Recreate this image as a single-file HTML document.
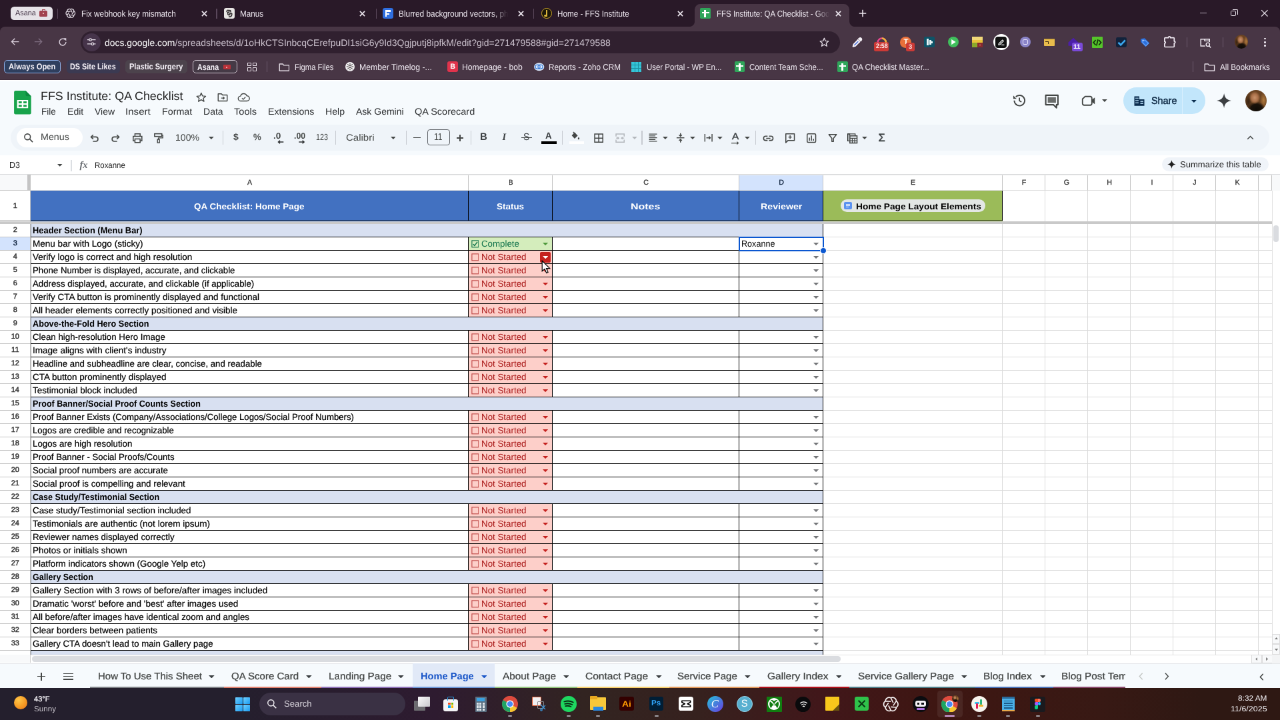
<!DOCTYPE html>
<html lang="en"><head><meta charset="utf-8"><title>FFS Institute: QA Checklist - Google Sheets</title>
<style>
html,body{margin:0;padding:0;width:1280px;height:720px;overflow:hidden;background:#fff;}
body{font-family:"Liberation Sans",sans-serif;}
#root{will-change:transform;position:absolute;left:0;top:0;width:1920px;height:1080px;transform:scale(0.6666667);transform-origin:0 0;overflow:hidden;background:#fff;}
#root div,#root span.t,#root svg{position:absolute;box-sizing:border-box;}
#root span.t{white-space:nowrap;display:block;}
#root{text-rendering:geometricPrecision;}

</style></head>
<body>
<div id="root">
<!-- chrome -->
<div style="left:0px;top:0px;width:1920px;height:60px;background:#291928;"></div>
<div style="left:0px;top:39.6px;width:1920px;height:80.85px;background:#483645;border-radius:7.5px 7.5px 0 0;"></div>
<div style="left:0px;top:119.4px;width:1920px;height:1.05px;background:#3e2d3b;"></div>
<div style="left:1041.9px;top:6px;width:232.5px;height:36px;background:#483645;border-radius:8.25px 8.25px 0 0;"></div>
<svg style="left:1033.8px;top:31.8px" width="8.1" height="8.1" viewBox="0 0 10 10"><path d="M10 0V10H0A10 10 0 0 0 10 0Z" fill="#483645"/></svg>
<svg style="left:1274.4px;top:31.8px" width="8.1" height="8.1" viewBox="0 0 10 10"><path d="M0 0V10H10A10 10 0 0 1 0 0Z" fill="#483645"/></svg>
<div style="left:15.9px;top:10.2px;width:63.6px;height:19.8px;background:#e6e3e8;border-radius:5.4px;"></div>
<span class="t" style="left:22.5px;top:14.01px;font-size:11.4px;line-height:13.68px;color:#3a2a3c;transform:scaleX(0.9559);transform-origin:0 50%;">Asana</span>
<div style="left:59.4px;top:16.2px;width:12px;height:9px;background:#a2434f;border-radius:1.5px;"></div>
<div style="left:63px;top:14.4px;width:4.8px;height:2.4px;border:1.2px solid #a2434f;border-bottom:none;border-radius:1px 1px 0 0;"></div>
<div style="left:64.35px;top:19.2px;width:2.1px;height:2.1px;background:#e8b0b0;"></div>
<div style="left:85.8px;top:12.6px;width:1.35px;height:15.9px;background:#5a475b;"></div>
<div style="left:324.3px;top:12.6px;width:1.35px;height:15.9px;background:#5a475b;"></div>
<div style="left:564px;top:12.6px;width:1.35px;height:15.9px;background:#5a475b;"></div>
<div style="left:800.1px;top:12.6px;width:1.35px;height:15.9px;background:#5a475b;"></div>
<svg style="left:98.1px;top:12.3px" width="15.6" height="15.6" viewBox="-12 -12 24 24"><path d="M0.00 -9.20A5.4 5.4 0 0 1 7.97 -4.60L3.46 2.00M7.97 -4.60A5.4 5.4 0 0 1 7.97 4.60L0.00 4.00M7.97 4.60A5.4 5.4 0 0 1 0.00 9.20L-3.46 2.00M0.00 9.20A5.4 5.4 0 0 1 -7.97 4.60L-3.46 -2.00M-7.97 4.60A5.4 5.4 0 0 1 -7.97 -4.60L-0.00 -4.00M-7.97 -4.60A5.4 5.4 0 0 1 -0.00 -9.20L3.46 -2.00" fill="none" stroke="#ece6ee" stroke-width="1.9" stroke-linejoin="round"/></svg>
<span class="t" style="left:122.4px;top:13.02px;font-size:13.05px;line-height:15.66px;color:#ece6ee;transform:scaleX(0.9058);transform-origin:0 50%;">Fix webhook key mismatch</span>
<svg style="left:301.5px;top:15.9px" width="9" height="9" viewBox="0 0 10 10"><path d="M1 1L9 9M9 1L1 9" stroke="#ece6ee" stroke-width="1.9" fill="none"/></svg>
<div style="left:336px;top:12px;width:15.9px;height:16.2px;background:#e8e6e4;border-radius:3.3px;"></div>
<svg style="left:336.9px;top:12.9px" width="14.4" height="14.4" viewBox="0 0 24 24"><g fill="none" stroke="#2e2a2c" stroke-width="2.6" stroke-linecap="round"><path d="M5 7C6 3 10 3 11 6S9 10 7 9M10 5C13 3 16 5 15 8M8 11C7 15 10 17 13 15V11M13 13C15 10 19 11 18 15S15 21 11 20"/></g></svg>
<span class="t" style="left:360.3px;top:13.02px;font-size:13.05px;line-height:15.66px;color:#ece6ee;transform:scaleX(0.8961);transform-origin:0 50%;">Manus</span>
<svg style="left:539.4px;top:15.9px" width="9" height="9" viewBox="0 0 10 10"><path d="M1 1L9 9M9 1L1 9" stroke="#ece6ee" stroke-width="1.9" fill="none"/></svg>
<div style="left:574.2px;top:12px;width:15.6px;height:16.2px;background:#2f6fe0;border-radius:3.3px;"></div>
<div style="left:577.5px;top:15.3px;width:8.7px;height:2.55px;background:#fff;"></div>
<div style="left:577.5px;top:15.3px;width:2.7px;height:9.9px;background:#fff;"></div>
<div style="left:577.5px;top:19.5px;width:6.6px;height:2.4px;background:#fff;"></div>
<span class="t" style="left:597.9px;top:13.02px;font-size:13.05px;line-height:15.66px;color:#ece6ee;transform:scaleX(0.9082);transform-origin:0 50%;-webkit-mask-image:linear-gradient(90deg,#000 86%,transparent 100%);">Blurred background vectors, ph</span>
<svg style="left:777.3px;top:15.9px" width="9" height="9" viewBox="0 0 10 10"><path d="M1 1L9 9M9 1L1 9" stroke="#ece6ee" stroke-width="1.9" fill="none"/></svg>
<div style="left:812.1px;top:12.3px;width:15.6px;height:15.6px;background:#1b1708;border-radius:50%;border:1.35px solid #c9a227;"></div>
<div style="left:819px;top:14.7px;width:1.8px;height:10.8px;background:#d9b43a;"></div>
<div style="left:816.3px;top:21.9px;width:4.5px;height:3.6px;background:#d9b43a;border-radius:50%;"></div>
<span class="t" style="left:836.4px;top:13.02px;font-size:13.05px;line-height:15.66px;color:#ece6ee;transform:scaleX(0.8947);transform-origin:0 50%;">Home - FFS Institute</span>
<svg style="left:1015.5px;top:15.9px" width="9" height="9" viewBox="0 0 10 10"><path d="M1 1L9 9M9 1L1 9" stroke="#ece6ee" stroke-width="1.9" fill="none"/></svg>
<div style="left:1050px;top:12.3px;width:16.2px;height:16.2px;background:#2fa65a;border-radius:1.8px;"></div>
<div style="left:1052.59px;top:17.81px;width:11.02px;height:2.27px;background:#fff;"></div>
<div style="left:1056.48px;top:14.89px;width:2.59px;height:11.34px;background:#fff;"></div>
<span class="t" style="left:1074.6px;top:13.02px;font-size:13.05px;line-height:15.66px;color:#ece6ee;transform:scaleX(0.8819);transform-origin:0 50%;-webkit-mask-image:linear-gradient(90deg,#000 88%,transparent 100%);">FFS Institute: QA Checklist - Goo</span>
<svg style="left:1253.4px;top:15.9px" width="9" height="9" viewBox="0 0 10 10"><path d="M1 1L9 9M9 1L1 9" stroke="#ece6ee" stroke-width="1.9" fill="none"/></svg>
<svg style="left:1287.6px;top:14.4px" width="12" height="12" viewBox="0 0 10 10"><path d="M5 0.6V9.4M0.6 5H9.4" stroke="#ece6ee" stroke-width="1.3" fill="none"/></svg>
<div style="left:1799.7px;top:19.05px;width:10.5px;height:1.2px;background:#b5aab6;"></div>
<div style="left:1846.2px;top:16.2px;width:8.1px;height:8.1px;border:1.2px solid #ece6ee;border-radius:1.5px;"></div>
<div style="left:1848.6px;top:14.1px;width:8.1px;height:8.1px;border-top:1.2px solid #ece6ee;border-right:1.2px solid #ece6ee;border-radius:0 2px 0 0;"></div>
<svg style="left:1890.75px;top:14.25px" width="11.7" height="11.7" viewBox="0 0 10 10"><path d="M1 1L9 9M9 1L1 9" stroke="#ece6ee" stroke-width="1.0" fill="none"/></svg>
<svg style="left:15.6px;top:56.4px" width="13.2" height="13.2" viewBox="0 0 16 16"><path d="M15 8H2M7.6 2.2L1.8 8L7.6 13.8" stroke="#d9cfdb" stroke-width="1.7" fill="none"/></svg>
<svg style="left:51.3px;top:56.4px" width="13.2" height="13.2" viewBox="0 0 16 16"><path d="M1 8H14M8.4 2.2L14.2 8L8.4 13.8" stroke="#7d6c7f" stroke-width="1.7" fill="none"/></svg>
<svg style="left:87px;top:56.1px" width="14.1" height="14.1" viewBox="0 0 16 16"><path d="M13.6 8A5.6 5.6 0 1 1 11.6 3.7" stroke="#d9cfdb" stroke-width="1.6" fill="none"/><path d="M9.2 1.4H14V6.2Z" fill="#d9cfdb"/></svg>
<div style="left:120.6px;top:46.5px;width:1139.7px;height:33px;background:#30202f;border-radius:16.5px;"></div>
<div style="left:123.6px;top:49.5px;width:27px;height:27px;background:#46344a;border-radius:50%;"></div>
<svg style="left:129.9px;top:56.4px" width="14.4" height="13.5" viewBox="0 0 16 15"><g stroke="#e6dfe8" stroke-width="1.5" fill="none"><path d="M1 4H4M8.4 4H15M1 11H7.6M12 11H15"/><circle cx="6.2" cy="4" r="2"/><circle cx="9.8" cy="11" r="2"/></g></svg>
<span class="t" style="left:157.2px;top:55.65px;font-size:14.02px;line-height:16.8px;color:#fff;transform:scaleX(0.9947);transform-origin:0 50%;">docs.google.com<span style="color:#c9bfcb">/spreadsheets/d/1oHkCTSInbcqCErefpuDI1siG6y9Id3Qgjputj8ipfkM/edit?gid=271479588#gid=271479588</span></span>
<svg style="left:1227.9px;top:54.9px" width="16.8" height="16.8" viewBox="0 0 24 24"><path d="M12 3.2L14.6 9.2L21 9.8L16.2 14L17.6 20.4L12 17L6.4 20.4L7.8 14L3 9.8L9.4 9.2Z" stroke="#e6dfe8" stroke-width="1.9" fill="none" stroke-linejoin="round"/></svg>
<svg style="left:1277.4px;top:54.9px" width="17.4" height="17.4" viewBox="0 0 24 24"><path d="M3.6 20.4L5 15.6L13.4 7.2L16.8 10.6L8.4 19Z" fill="#4a6fd8" stroke="#f6f2f8" stroke-width="2.6" stroke-linejoin="round"/><path d="M12.6 6L18 11.4M15 4.4L19.6 9L21.4 6.6C22 4 20 2 17.4 2.6Z" fill="#f6f2f8" stroke="#f6f2f8" stroke-width="2"/></svg>
<div style="left:1311.3px;top:63px;width:22.2px;height:13.8px;background:#cc3a36;border-radius:2.7px;"></div>
<svg style="left:1314.6px;top:53.4px" width="15.6" height="12" viewBox="0 0 20 14"><path d="M2 13A8 8 0 0 1 18 13" stroke="#e8468c" stroke-width="3.2" fill="none"/><path d="M10 5A8 8 0 0 1 18 13" stroke="#f2b63a" stroke-width="3.2" fill="none"/></svg>
<span class="t" style="left:1313.7px;top:64.29px;font-size:9.6px;line-height:11.52px;color:#fbeaea;font-weight:bold;transform:scaleX(0.9212);transform-origin:0 50%;">2:58</span>
<div style="left:1350.3px;top:55.2px;width:16.5px;height:16.5px;background:#e8703a;border-radius:50%;"></div>
<span class="t" style="left:1355.4px;top:56.76px;font-size:11.4px;line-height:13.68px;color:#fff;font-weight:bold;">T</span>
<div style="left:1358.7px;top:63.9px;width:13.5px;height:12.9px;background:#cc3a36;border-radius:2.7px;"></div>
<span class="t" style="left:1362.9px;top:64.92px;font-size:9.3px;line-height:11.16px;color:#fbeaea;font-weight:bold;">3</span>
<div style="left:1386.3px;top:55.2px;width:16.2px;height:16.2px;background:#0d5468;border-radius:2.1px;"></div>
<div style="left:1390.2px;top:58.2px;width:2.4px;height:10.2px;background:#e8f4f6;"></div>
<div style="left:1394.4px;top:59.7px;width:2.4px;height:7.2px;background:#e8f4f6;"></div>
<div style="left:1397.4px;top:61.8px;width:2.1px;height:3px;background:#e8f4f6;"></div>
<div style="left:1421.7px;top:55.2px;width:16.2px;height:16.2px;background:#3fbf5c;border-radius:50%;"></div>
<svg style="left:1427.4px;top:59.4px" width="6.9" height="8.1" viewBox="0 0 8 10"><path d="M0 0L8 5L0 10Z" fill="#fff"/></svg>
<div style="left:1457.7px;top:55.2px;width:16.2px;height:15.9px;background:#e8c23a;border-radius:1px;"></div>
<div style="left:1457.7px;top:55.2px;width:16.2px;height:5.1px;background:#f1d878;"></div>
<div style="left:1457.7px;top:63.9px;width:8.4px;height:7.2px;background:#8aa82a;"></div>
<div style="left:1466.1px;top:63.9px;width:7.8px;height:7.2px;background:#8a2a2e;"></div>
<div style="left:1469.4px;top:66.6px;width:1.8px;height:1.8px;background:#f0b0b0;"></div>
<div style="left:1489.5px;top:51px;width:24.3px;height:24.3px;background:#fff;border-radius:50%;"></div>
<div style="left:1493.1px;top:54.6px;width:17.1px;height:17.1px;background:#111;border-radius:3.9px;"></div>
<svg style="left:1495.5px;top:57px" width="12.3" height="12.3" viewBox="0 0 16 16"><path d="M3 11L10 4L12 6L5 13L2.6 13.4Z M8 13.4H13.6" stroke="#fff" stroke-width="1.6" fill="none"/></svg>
<div style="left:1529.7px;top:55.2px;width:16.2px;height:16.2px;background:#8a84c8;border-radius:50%;"></div>
<div style="left:1533.6px;top:59.4px;width:8.4px;height:7.8px;border:1.35px solid #e8e4fa;border-radius:2.1px;"></div>
<div style="left:1566.3px;top:57.6px;width:15.3px;height:11.1px;background:#e8bc4c;border-radius:1px;"></div>
<div style="left:1566.3px;top:57.6px;width:15.3px;height:1.8px;background:#a88428;"></div>
<div style="left:1567.8px;top:61.5px;width:4.8px;height:4.8px;border-top:1.2px solid #3a2a10;border-right:1.2px solid #3a2a10;"></div>
<svg style="left:1600.5px;top:55.5px" width="18" height="13.5" viewBox="0 0 24 18"><path d="M2 10L12 1L22 10V17H2Z" fill="#4b1fa8"/></svg>
<div style="left:1608px;top:63.9px;width:15.9px;height:12.9px;background:#7a4ad8;border-radius:2.7px;"></div>
<span class="t" style="left:1610.4px;top:65.07px;font-size:9.3px;line-height:11.16px;color:#fff;font-weight:bold;transform:scaleX(1.0985);transform-origin:0 50%;">11</span>
<div style="left:1637.7px;top:55.2px;width:16.8px;height:16.5px;background:#55c42a;border-radius:1px;"></div>
<svg style="left:1639.2px;top:57.6px" width="13.8" height="11.7" viewBox="0 0 18 14"><path d="M6 2L1.5 7L6 12M12 2L16.5 7L12 12M10.4 1L7.6 13" stroke="#12320a" stroke-width="2.2" fill="none"/></svg>
<div style="left:1674px;top:55.5px;width:16.2px;height:15.9px;background:#12233c;border-radius:2.4px;"></div>
<svg style="left:1675.5px;top:57.9px" width="13.2" height="11.4" viewBox="0 0 18 14"><path d="M2 7L7 12L16 2.4" stroke="#3aa8f0" stroke-width="3.6" fill="none"/></svg>
<svg style="left:1709.4px;top:54.9px" width="17.4" height="17.4" viewBox="0 0 24 24"><path d="M3 4.5L11 3L21 13L13 21L3 11Z" fill="#2a6fdc"/><path d="M7 9L12 7.5L18.6 14L13.6 19L7 12.6Z" fill="none" stroke="#6aa4f4" stroke-width="1.6"/><circle cx="7.6" cy="7.6" r="1.5" fill="#cfe0ff"/></svg>
<svg style="left:1740px;top:51px" width="30" height="24" viewBox="1160 34 20 16"><path d="M1165.2 37.8H1168.3A1.1 1.2 0 0 1 1170.5 37.8H1173.6A0.6 0.6 0 0 1 1174.2 38.4V41.2A1 1 0 0 1 1174.2 43.2V46.4A0.6 0.6 0 0 1 1173.6 47H1165.2A0.6 0.6 0 0 1 1164.6 46.4V43.4A0.9 0.9 0 0 0 1164.6 41.6V38.4A0.6 0.6 0 0 1 1165.2 37.8Z" fill="none" stroke="#efe9f1" stroke-width="1.15" stroke-linejoin="round"/></svg>
<div style="left:1780.2px;top:55.5px;width:1.2px;height:15.6px;background:#6a586c;"></div>
<svg style="left:1798.5px;top:54.6px" width="18.9" height="17.7" viewBox="0 0 26 24"><path d="M12 19H3V5H21V11" fill="none" stroke="#efe9f1" stroke-width="2"/><path d="M11 5V8.6H21" fill="none" stroke="#efe9f1" stroke-width="2"/><circle cx="17.6" cy="16" r="3.6" fill="none" stroke="#efe9f1" stroke-width="2"/><path d="M20.2 18.8L23.6 22.4" stroke="#efe9f1" stroke-width="2"/></svg>
<div style="left:1834.2px;top:55.5px;width:1.2px;height:15.6px;background:#6a586c;"></div>
<div style="left:1851.6px;top:52.2px;width:20.7px;height:20.7px;background:radial-gradient(ellipse 26% 30% at 44% 36%,#c9926a 0,#a96f48 60%,rgba(169,111,72,0) 100%),radial-gradient(ellipse 42% 36% at 52% 90%,#0f0b06 0,#1a120a 65%,rgba(26,18,10,0) 100%),radial-gradient(ellipse 18% 38% at 86% 48%,#b07a3e 0,rgba(176,122,62,0) 100%),radial-gradient(ellipse 20% 40% at 14% 55%,#3a2412 0,rgba(58,36,18,0) 100%),#6a4322;border-radius:50%;"></div>
<div style="left:1896.3px;top:56.55px;width:2.7px;height:2.7px;background:#efe9f1;border-radius:50%;"></div>
<div style="left:1896.3px;top:61.95px;width:2.7px;height:2.7px;background:#efe9f1;border-radius:50%;"></div>
<div style="left:1896.3px;top:67.35px;width:2.7px;height:2.7px;background:#efe9f1;border-radius:50%;"></div>
<div style="left:6.3px;top:90.3px;width:84.9px;height:19.8px;background:#2f3f5e;border:1.2px solid #8fb0e8;border-radius:5.1px;"></div>
<span class="t" style="left:13.2px;top:92.79px;font-size:12.6px;line-height:15.12px;color:#f4f0f6;font-weight:bold;transform:scaleX(0.8910);transform-origin:0 50%;">Always Open</span>
<div style="left:99.6px;top:90.3px;width:80.1px;height:19.8px;background:#3b3a52;border:1.2px solid #3b3a52;border-radius:5.1px;"></div>
<span class="t" style="left:105.3px;top:92.79px;font-size:12.6px;line-height:15.12px;color:#f4f0f6;font-weight:bold;transform:scaleX(0.8605);transform-origin:0 50%;">DS Site Likes</span>
<div style="left:188.1px;top:90.3px;width:92.7px;height:19.8px;background:#4c434c;border:1.2px solid #4c434c;border-radius:5.1px;"></div>
<span class="t" style="left:194.4px;top:92.79px;font-size:12.6px;line-height:15.12px;color:#f4f0f6;font-weight:bold;transform:scaleX(0.8764);transform-origin:0 50%;">Plastic Surgery</span>
<div style="left:288.9px;top:90.3px;width:67.2px;height:19.8px;background:#453a46;border:1.2px solid #cfc6d0;border-radius:5.1px;"></div>
<span class="t" style="left:296.4px;top:92.61px;font-size:12.9px;line-height:15.48px;color:#f4f0f6;font-weight:bold;transform:scaleX(0.8290);transform-origin:0 50%;">Asana</span>
<div style="left:334.5px;top:96.9px;width:11.1px;height:7.5px;background:#b8323a;border-radius:1px;"></div>
<div style="left:339px;top:99.6px;width:2.1px;height:2.1px;background:#f0a0a0;"></div>
<div style="left:371.1px;top:93.6px;width:5.7px;height:5.7px;border:1.12px solid #e6dfe8;border-radius:0.5px;"></div>
<div style="left:371.1px;top:101.4px;width:5.7px;height:5.7px;border:1.12px solid #e6dfe8;border-radius:0.5px;"></div>
<div style="left:378.9px;top:93.6px;width:5.7px;height:5.7px;border:1.12px solid #e6dfe8;border-radius:0.5px;"></div>
<div style="left:378.9px;top:101.4px;width:5.7px;height:5.7px;border:1.12px solid #e6dfe8;border-radius:0.5px;"></div>
<div style="left:400.2px;top:92.4px;width:1.2px;height:15.9px;background:#6a586c;"></div>
<svg style="left:417.6px;top:93.6px" width="16.8" height="13.8" viewBox="0 0 22 18"><path d="M1.6 2.6H8L10 5H20.4V16H1.6Z" fill="none" stroke="#e6dfe8" stroke-width="1.8" stroke-linejoin="round"/></svg>
<span class="t" style="left:441.9px;top:92.61px;font-size:12.9px;line-height:15.48px;color:#ece6ee;transform:scaleX(0.8776);transform-origin:0 50%;">Figma Files</span>
<div style="left:517.8px;top:93px;width:14.4px;height:14.4px;background:#f4f2f4;border-radius:50%;"></div>
<svg style="left:519px;top:94.2px" width="12" height="12" viewBox="0 0 16 16"><g stroke="#3a3436" stroke-width="1.4" fill="none"><circle cx="8" cy="8" r="2.4"/><path d="M8 1V4M8 12V15M1 8H4M12 8H15M3 3L5.2 5.2M10.8 10.8L13 13M13 3L10.8 5.2M5.2 10.8L3 13"/></g></svg>
<span class="t" style="left:539.1px;top:92.61px;font-size:12.9px;line-height:15.48px;color:#ece6ee;transform:scaleX(0.9495);transform-origin:0 50%;">Member Timelog -...</span>
<div style="left:670.8px;top:92.4px;width:15.9px;height:15.9px;background:#e0334c;border-radius:3px;"></div>
<span class="t" style="left:675.3px;top:94.02px;font-size:10.8px;line-height:12.96px;color:#fff;font-weight:bold;">B</span>
<span class="t" style="left:693.3px;top:92.61px;font-size:12.9px;line-height:15.48px;color:#ece6ee;transform:scaleX(0.9459);transform-origin:0 50%;">Homepage - bob</span>
<svg style="left:800.1px;top:93px" width="17.4" height="14.4" viewBox="0 0 24 20"><ellipse cx="12" cy="10" rx="10.6" ry="8.4" fill="#dbe9fb"/><ellipse cx="9" cy="10" rx="5" ry="4.2" fill="none" stroke="#3a7bd5" stroke-width="1.8"/><ellipse cx="14.6" cy="10" rx="5" ry="4.2" fill="none" stroke="#3a7bd5" stroke-width="1.8"/></svg>
<span class="t" style="left:823.2px;top:92.61px;font-size:12.9px;line-height:15.48px;color:#ece6ee;transform:scaleX(0.9076);transform-origin:0 50%;">Reports - Zoho CRM</span>
<div style="left:947.1px;top:92.7px;width:15.3px;height:15.3px;background:#35c5d8;"></div>
<div style="left:951.75px;top:92.7px;width:0.9px;height:15.3px;background:#1a8fa0;"></div>
<div style="left:947.1px;top:97.35px;width:15.3px;height:0.9px;background:#1a8fa0;"></div>
<div style="left:956.85px;top:92.7px;width:0.9px;height:15.3px;background:#1a8fa0;"></div>
<div style="left:947.1px;top:102.45px;width:15.3px;height:0.9px;background:#1a8fa0;"></div>
<span class="t" style="left:970.2px;top:92.61px;font-size:12.9px;line-height:15.48px;color:#ece6ee;transform:scaleX(0.8883);transform-origin:0 50%;">User Portal - WP En...</span>
<div style="left:1101.9px;top:92.4px;width:15.6px;height:15.6px;background:#2fa65a;border-radius:1.8px;"></div>
<div style="left:1104.4px;top:97.7px;width:10.61px;height:2.18px;background:#fff;"></div>
<div style="left:1108.14px;top:94.9px;width:2.5px;height:10.92px;background:#fff;"></div>
<span class="t" style="left:1124.1px;top:92.61px;font-size:12.9px;line-height:15.48px;color:#ece6ee;transform:scaleX(0.8941);transform-origin:0 50%;">Content Team Sche...</span>
<div style="left:1256.1px;top:92.4px;width:15.6px;height:15.6px;background:#2fa65a;border-radius:1.8px;"></div>
<div style="left:1258.6px;top:97.7px;width:10.61px;height:2.18px;background:#fff;"></div>
<div style="left:1262.34px;top:94.9px;width:2.5px;height:10.92px;background:#fff;"></div>
<span class="t" style="left:1278px;top:92.61px;font-size:12.9px;line-height:15.48px;color:#ece6ee;transform:scaleX(0.9126);transform-origin:0 50%;">QA Checklist Master...</span>
<div style="left:1788.6px;top:92.4px;width:1.2px;height:15.9px;background:#6a586c;"></div>
<svg style="left:1806px;top:93.6px" width="16.8" height="13.8" viewBox="0 0 22 18"><path d="M1.6 2.6H8L10 5H20.4V16H1.6Z" fill="none" stroke="#e6dfe8" stroke-width="1.8" stroke-linejoin="round"/></svg>
<span class="t" style="left:1830.3px;top:92.61px;font-size:12.9px;line-height:15.48px;color:#ece6ee;transform:scaleX(0.9098);transform-origin:0 50%;">All Bookmarks</span>
<!-- sheets header -->
<div style="left:0px;top:120.45px;width:1920px;height:141.6px;background:#f6fafd;"></div>
<div style="left:0px;top:120.45px;width:1920px;height:1.8px;background:#fff;"></div>
<svg style="left:21.3px;top:136.2px" width="25.8" height="35.4" viewBox="0 0 34 47"><path d="M3 0H23L34 11V44A3 3 0 0 1 31 47H3A3 3 0 0 1 0 44V3A3 3 0 0 1 3 0Z" fill="#18a34b"/><path d="M23 0L34 11H26A3 3 0 0 1 23 8Z" fill="#0e8a40"/><path d="M6 18.6H28V35H6Z M9 21.4V25.2H15.4V21.4Z M18.6 21.4V25.2H25V21.4Z M9 28.2V32.2H15.4V28.2Z M18.6 28.2V32.2H25V28.2Z" fill="#fff" fill-rule="evenodd"/></svg>
<span class="t" style="left:61.2px;top:134.19px;font-size:17.85px;line-height:21.42px;color:#1f1f1f;transform:scaleX(1.0015);transform-origin:0 50%;">FFS Institute: QA Checklist</span>
<svg style="left:293.1px;top:136.5px" width="17.7" height="17.7" viewBox="0 0 24 24"><path d="M12 3.4L14.6 9.4L21 10L16.2 14.2L17.6 20.6L12 17.2L6.4 20.6L7.8 14.2L3 10L9.4 9.4Z" stroke="#444746" stroke-width="1.9" fill="none" stroke-linejoin="round"/></svg>
<svg style="left:324.6px;top:136.8px" width="18" height="18" viewBox="0 0 24 24"><path d="M3 5H9.6L11.6 7.4H21V19.4H3Z" stroke="#444746" stroke-width="1.9" fill="none" stroke-linejoin="round"/><path d="M9 13.4H15M12.6 10.8L15.2 13.4L12.6 16" stroke="#444746" stroke-width="1.7" fill="none"/></svg>
<svg style="left:356.4px;top:136.8px" width="19.2" height="18" viewBox="0 0 26 24"><path d="M7 19.4A5 5 0 0 1 6.6 9.4A6.6 6.6 0 0 1 19.2 9A5.2 5.2 0 0 1 19.6 19.4Z" stroke="#444746" stroke-width="1.9" fill="none" stroke-linejoin="round"/><path d="M9.4 13.6L12 16.2L16.6 11.4" stroke="#444746" stroke-width="1.7" fill="none"/></svg>
<span class="t" style="left:62.25px;top:159.18px;font-size:13.95px;line-height:16.74px;color:#2d2f31;transform:scaleX(0.9676);transform-origin:0 50%;">File</span>
<span class="t" style="left:101.4px;top:159.18px;font-size:13.95px;line-height:16.74px;color:#2d2f31;transform:scaleX(1.0109);transform-origin:0 50%;">Edit</span>
<span class="t" style="left:141.75px;top:159.18px;font-size:13.95px;line-height:16.74px;color:#2d2f31;transform:scaleX(1.0055);transform-origin:0 50%;">View</span>
<span class="t" style="left:188.4px;top:159.18px;font-size:13.95px;line-height:16.74px;color:#2d2f31;transform:scaleX(1.0834);transform-origin:0 50%;">Insert</span>
<span class="t" style="left:242.7px;top:159.18px;font-size:13.95px;line-height:16.74px;color:#2d2f31;transform:scaleX(1.0254);transform-origin:0 50%;">Format</span>
<span class="t" style="left:304.8px;top:159.18px;font-size:13.95px;line-height:16.74px;color:#2d2f31;transform:scaleX(1.0079);transform-origin:0 50%;">Data</span>
<span class="t" style="left:351.3px;top:159.18px;font-size:13.95px;line-height:16.74px;color:#2d2f31;transform:scaleX(1.0502);transform-origin:0 50%;">Tools</span>
<span class="t" style="left:401.7px;top:159.18px;font-size:13.95px;line-height:16.74px;color:#2d2f31;transform:scaleX(1.0156);transform-origin:0 50%;">Extensions</span>
<span class="t" style="left:488.1px;top:159.18px;font-size:13.95px;line-height:16.74px;color:#2d2f31;transform:scaleX(1.0143);transform-origin:0 50%;">Help</span>
<span class="t" style="left:534px;top:159.18px;font-size:13.95px;line-height:16.74px;color:#2d2f31;transform:scaleX(1.0054);transform-origin:0 50%;">Ask Gemini</span>
<span class="t" style="left:621.9px;top:159.18px;font-size:13.95px;line-height:16.74px;color:#2d2f31;transform:scaleX(1.0398);transform-origin:0 50%;">QA Scorecard</span>
<svg style="left:1517.1px;top:139.2px" width="23.4" height="23.4" viewBox="0 0 24 24"><path d="M4.6 12A8 8 0 1 0 7 6.4" stroke="#444746" stroke-width="2" fill="none"/><path d="M3 4.4V9.4H8Z" fill="#444746"/><path d="M12.4 7.6V12.4L15.6 14.4" stroke="#444746" stroke-width="1.9" fill="none"/></svg>
<svg style="left:1565.4px;top:138.6px" width="25.5" height="25.5" viewBox="0 0 24 24"><path d="M3.4 3.6H20.6V17H18.6V21.4L14.2 17H3.4Z" stroke="#444746" stroke-width="2" fill="none" stroke-linejoin="round"/><path d="M6.2 6.4H17.8V14.2H6.2Z" fill="#6a6d6c"/></svg>
<svg style="left:1620.9px;top:140.4px" width="24" height="22.5" viewBox="0 0 26 24"><path d="M7 5H15.6A2.6 2.6 0 0 1 18.2 7.6V16.4A2.6 2.6 0 0 1 15.6 19H5.6A2.6 2.6 0 0 1 3 16.4V9Z" stroke="#444746" stroke-width="2" fill="none" stroke-linejoin="round"/><path d="M18.4 10L23 6.6V17.4L18.4 14Z" fill="#444746"/></svg>
<svg style="left:1653px;top:149.48px" width="7.8" height="4.05" viewBox="0 0 10 5"><path d="M0 0H10L5 5Z" fill="#444746"/></svg>
<div style="left:1684.5px;top:131.4px;width:123px;height:39.3px;background:#c2e6fb;border-radius:19.65px;"></div>
<div style="left:1773.3px;top:131.4px;width:1.2px;height:39.3px;background:#d8effe;"></div>
<svg style="left:1700.4px;top:142.5px" width="18" height="17.4" viewBox="0 0 24 23"><path d="M2 2H12V8H22V21H2Z" fill="#0a2c4e"/><g fill="#c2e7ff"><rect x="4.4" y="4.6" width="2.2" height="2.2"/><rect x="8" y="4.6" width="2.2" height="2.2"/><rect x="4.4" y="9.2" width="2.2" height="2.2"/><rect x="8" y="9.2" width="2.2" height="2.2"/><rect x="4.4" y="13.8" width="2.2" height="2.2"/><rect x="8" y="13.8" width="2.2" height="2.2"/><rect x="14" y="11" width="6" height="2"/><rect x="14" y="15" width="6" height="2"/></g></svg>
<span class="t" style="left:1726.8px;top:142.8px;font-size:15px;line-height:18px;color:#0a2540;transform:scaleX(0.9593);transform-origin:0 50%;-webkit-text-stroke:0.45px #0a2540;">Share</span>
<svg style="left:1786.8px;top:149.85px" width="7.8" height="3.9" viewBox="0 0 10 5"><path d="M0 0H10L5 5Z" fill="#0b2e4f"/></svg>
<svg style="left:1824.6px;top:140.1px" width="22.2" height="22.2" viewBox="-12 -12 24 24"><path d="M0 -12C1.2 -4.6 4.6 -1.2 12 0C4.6 1.2 1.2 4.6 0 12C-1.2 4.6 -4.6 1.2 -12 0C-4.6 -1.2 -1.2 -4.6 0 -12Z" fill="#3c3f42"/></svg>
<div style="left:1867.95px;top:134.85px;width:32.1px;height:32.1px;background:radial-gradient(ellipse 26% 30% at 44% 36%,#c9926a 0,#a96f48 60%,rgba(169,111,72,0) 100%),radial-gradient(ellipse 42% 36% at 52% 90%,#0f0b06 0,#1a120a 65%,rgba(26,18,10,0) 100%),radial-gradient(ellipse 18% 38% at 86% 48%,#b07a3e 0,rgba(176,122,62,0) 100%),radial-gradient(ellipse 20% 40% at 14% 55%,#3a2412 0,rgba(58,36,18,0) 100%),#6a4322;border-radius:50%;"></div>
<div style="left:15.9px;top:186.6px;width:1888.5px;height:39.9px;background:#eff4f9;border-radius:19.95px;"></div>
<div style="left:24.9px;top:192px;width:99px;height:28.8px;background:#fff;border-radius:14.4px;"></div>
<svg style="left:34.8px;top:198.9px" width="15.6" height="15.6" viewBox="0 0 20 20"><circle cx="8" cy="8" r="5.6" stroke="#444746" stroke-width="2" fill="none"/><path d="M12.2 12.2L18 18" stroke="#444746" stroke-width="2.2"/></svg>
<span class="t" style="left:61.2px;top:197.13px;font-size:13.95px;line-height:16.74px;color:#444746;transform:scaleX(1.0246);transform-origin:0 50%;">Menus</span>
<svg style="left:133.35px;top:198.45px" width="17.1" height="17.1" viewBox="0 0 24 24"><path d="M6 10.4H15A4.6 4.6 0 0 1 15 19.6H9" stroke="#444746" stroke-width="2.3" fill="none"/><path d="M9.6 6L5 10.4L9.6 14.8" stroke="#444746" stroke-width="2.3" fill="none"/></svg>
<svg style="left:164.85px;top:198.45px" width="17.1" height="17.1" viewBox="0 0 24 24"><path d="M18 10.4H9A4.6 4.6 0 0 0 9 19.6H15" stroke="#444746" stroke-width="2.3" fill="none"/><path d="M14.4 6L19 10.4L14.4 14.8" stroke="#444746" stroke-width="2.3" fill="none"/></svg>
<svg style="left:196.5px;top:197.7px" width="18.6" height="18.6" viewBox="0 0 24 24"><path d="M7 8V3.6H17V8M7 17H3.6V8.4H20.4V17H17" stroke="#444746" stroke-width="2" fill="none"/><rect x="7" y="13.4" width="10" height="7" stroke="#444746" stroke-width="2" fill="none"/></svg>
<svg style="left:228px;top:197.7px" width="18.6" height="18.6" viewBox="0 0 24 24"><rect x="5" y="3.4" width="14" height="5.2" stroke="#444746" stroke-width="2" fill="none"/><path d="M19 6H21V11.4H12.4V14.4" stroke="#444746" stroke-width="1.8" fill="none"/><rect x="10.6" y="14.4" width="3.8" height="6.4" stroke="#444746" stroke-width="1.8" fill="none"/></svg>
<span class="t" style="left:263.1px;top:199.02px;font-size:13.8px;line-height:16.56px;color:#444746;transform:scaleX(1.0200);transform-origin:0 50%;">100%</span>
<svg style="left:312.9px;top:205.27px" width="7.8" height="4.05" viewBox="0 0 10 5"><path d="M0 0H10L5 5Z" fill="#444746"/></svg>
<div style="left:334.27px;top:196.2px;width:1.2px;height:20.4px;background:#c7cbd1;"></div>
<span class="t" style="left:350.1px;top:197.82px;font-size:13.8px;line-height:16.56px;color:#444746;font-weight:bold;transform:scaleX(1.0163);transform-origin:0 50%;">$</span>
<span class="t" style="left:380.1px;top:198px;font-size:13.5px;line-height:16.2px;color:#444746;transform:scaleX(0.9747);transform-origin:0 50%;-webkit-text-stroke:0.3px #444746;">%</span>
<span class="t" style="left:409.5px;top:197.34px;font-size:12.6px;line-height:15.12px;color:#444746;font-weight:bold;transform:scaleX(1.0849);transform-origin:0 50%;">.0</span>
<svg style="left:416.4px;top:210.3px" width="9.6" height="6" viewBox="0 0 12 8"><path d="M12 4H2M5 1L1.6 4L5 7" stroke="#2d2f31" stroke-width="2" fill="none"/></svg>
<span class="t" style="left:441.3px;top:197.34px;font-size:12.6px;line-height:15.12px;color:#444746;font-weight:bold;transform:scaleX(0.9763);transform-origin:0 50%;">.00</span>
<svg style="left:447.6px;top:210.3px" width="9.6" height="6" viewBox="0 0 12 8"><path d="M0 4H10M7 1L10.4 4L7 7" stroke="#2d2f31" stroke-width="2" fill="none"/></svg>
<span class="t" style="left:474.3px;top:198.48px;font-size:13.2px;line-height:15.84px;color:#444746;transform:scaleX(0.8173);transform-origin:0 50%;">123</span>
<div style="left:502.88px;top:196.2px;width:1.2px;height:20.4px;background:#c7cbd1;"></div>
<span class="t" style="left:519.3px;top:197.73px;font-size:13.95px;line-height:16.74px;color:#444746;transform:scaleX(1.0775);transform-origin:0 50%;">Calibri</span>
<svg style="left:585.6px;top:205.27px" width="7.8" height="4.05" viewBox="0 0 10 5"><path d="M0 0H10L5 5Z" fill="#444746"/></svg>
<div style="left:609.07px;top:196.2px;width:1.2px;height:20.4px;background:#c7cbd1;"></div>
<div style="left:620.4px;top:206.25px;width:10.8px;height:1.2px;background:#444746;"></div>
<div style="left:640.5px;top:194.1px;width:34.5px;height:24px;border:1.12px solid #5f6368;border-radius:3.9px;"></div>
<span class="t" style="left:651.3px;top:197.58px;font-size:14.7px;line-height:17.64px;color:#444746;transform:scaleX(0.8257);transform-origin:0 50%;">11</span>
<div style="left:684.6px;top:206.4px;width:10.8px;height:1.35px;background:#444746;"></div>
<div style="left:689.4px;top:201.6px;width:1.35px;height:10.8px;background:#444746;"></div>
<div style="left:705.97px;top:196.2px;width:1.2px;height:20.4px;background:#c7cbd1;"></div>
<span class="t" style="left:720.3px;top:197.37px;font-size:15.3px;line-height:18.36px;color:#3c4043;font-weight:bold;transform:scaleX(0.9774);transform-origin:0 50%;">B</span>
<span class="t" style="left:753.6px;top:197.85px;font-size:14.4px;line-height:17.4px;color:#3c4043;font-style:italic;font-weight:bold;font-family:'Liberation Serif',serif;">I</span>
<span class="t" style="left:785.1px;top:197.73px;font-size:14.7px;line-height:17.64px;color:#3c4043;transform:scaleX(0.9485);transform-origin:0 50%;">S</span>
<div style="left:781.8px;top:206.1px;width:15.9px;height:1.35px;background:#444746;"></div>
<span class="t" style="left:818.4px;top:196.2px;font-size:13.5px;line-height:16.2px;color:#3c4043;font-weight:bold;transform:scaleX(0.9847);transform-origin:0 50%;">A</span>
<div style="left:811.8px;top:212.1px;width:23.1px;height:3.75px;background:#000;"></div>
<div style="left:843.07px;top:196.2px;width:1.2px;height:20.4px;background:#c7cbd1;"></div>
<svg style="left:853.8px;top:195px" width="17.4" height="17.4" viewBox="0 0 24 24"><path d="M5 11.4L11 5L17.4 11.6L11 18Z" fill="#444746"/><path d="M8 4L11 7" stroke="#444746" stroke-width="2"/><path d="M19.4 14.6C20.6 16.4 21 17.2 21 18A1.7 1.7 0 0 1 17.6 18C17.6 17.2 18.2 16.4 19.4 14.6Z" fill="#444746"/></svg>
<div style="left:853.8px;top:212.4px;width:21.9px;height:3.6px;background:#fff;"></div>
<svg style="left:888.75px;top:197.85px" width="18.3" height="18.3" viewBox="0 0 24 24"><rect x="4" y="4" width="16" height="16" stroke="#444746" stroke-width="2" fill="none"/><path d="M12 4V20M4 12H20" stroke="#444746" stroke-width="2"/></svg>
<svg style="left:921.15px;top:197.85px" width="18.3" height="18.3" viewBox="0 0 24 24"><path d="M4 9V4H20V9M4 15V20H20V15" stroke="#b4b8bd" stroke-width="2" fill="none"/><path d="M4 12H9M20 12H15M7 10L9.4 12L7 14M17 10L14.6 12L17 14" stroke="#b4b8bd" stroke-width="1.8" fill="none"/></svg>
<svg style="left:948px;top:205.27px" width="7.8" height="4.05" viewBox="0 0 10 5"><path d="M0 0H10L5 5Z" fill="#b4b8bd"/></svg>
<div style="left:962.47px;top:196.2px;width:1.2px;height:20.4px;background:#c7cbd1;"></div>
<svg style="left:971.25px;top:198.45px" width="17.1" height="17.1" viewBox="0 0 24 24"><path d="M3.6 4.4H20.4M3.6 8.2H17M3.6 12H20.4M3.6 15.8H17M3.6 19.6H20.4" stroke="#444746" stroke-width="1.8"/></svg>
<svg style="left:993.9px;top:205.27px" width="7.8" height="4.05" viewBox="0 0 10 5"><path d="M0 0H10L5 5Z" fill="#444746"/></svg>
<svg style="left:1012.2px;top:198.3px" width="17.4" height="17.4" viewBox="0 0 24 24"><path d="M4 12H20" stroke="#444746" stroke-width="2"/><path d="M12 2.4V8.6M9 6L12 9L15 6M12 21.6V15.4M9 18L12 15L15 18" stroke="#444746" stroke-width="1.9" fill="none"/></svg>
<svg style="left:1035px;top:205.27px" width="7.8" height="4.05" viewBox="0 0 10 5"><path d="M0 0H10L5 5Z" fill="#444746"/></svg>
<svg style="left:1053.6px;top:198.3px" width="17.4" height="17.4" viewBox="0 0 24 24"><path d="M4.6 4V20M19.4 4V20" stroke="#444746" stroke-width="2"/><path d="M7.6 12H16M13 9L16 12L13 15" stroke="#444746" stroke-width="1.9" fill="none"/></svg>
<svg style="left:1076.1px;top:205.27px" width="7.8" height="4.05" viewBox="0 0 10 5"><path d="M0 0H10L5 5Z" fill="#444746"/></svg>
<span class="t" style="left:1098px;top:196.5px;font-size:13.5px;line-height:16.2px;color:#3c4043;transform:scaleX(1.1328);transform-origin:0 50%;-webkit-text-stroke:0.4px #3c4043;">A</span>
<svg style="left:1097.1px;top:211.5px" width="12.6" height="5.1" viewBox="0 0 16 6"><path d="M0 3H13M10.6 0.6L13.4 3L10.6 5.4" stroke="#444746" stroke-width="1.5" fill="none"/></svg>
<svg style="left:1116.9px;top:205.27px" width="7.8" height="4.05" viewBox="0 0 10 5"><path d="M0 0H10L5 5Z" fill="#444746"/></svg>
<div style="left:1132.88px;top:196.2px;width:1.2px;height:20.4px;background:#c7cbd1;"></div>
<svg style="left:1143.45px;top:197.55px" width="18.9" height="18.9" viewBox="0 0 24 24"><path d="M10.6 8H7A4 4 0 0 0 7 16H10.6M13.4 8H17A4 4 0 0 1 17 16H13.4M8 12H16" stroke="#444746" stroke-width="2" fill="none"/></svg>
<svg style="left:1175.85px;top:197.85px" width="18.3" height="18.3" viewBox="0 0 24 24"><path d="M3.6 3.6H20.4V16.6H8L3.6 21Z" stroke="#444746" stroke-width="2" fill="none" stroke-linejoin="round"/><path d="M12 6.6V13.6M8.6 10H15.4" stroke="#444746" stroke-width="1.9"/></svg>
<svg style="left:1207.65px;top:197.85px" width="18.3" height="18.3" viewBox="0 0 24 24"><rect x="3.6" y="3.6" width="16.8" height="16.8" rx="2" stroke="#444746" stroke-width="2" fill="none"/><path d="M8 17V11M12 17V7M16 17V13.4" stroke="#444746" stroke-width="2"/></svg>
<svg style="left:1239.9px;top:198px" width="18" height="18" viewBox="0 0 24 24"><path d="M4.4 5H19.6L13.6 12.6V19H10.4V12.6Z" stroke="#444746" stroke-width="2" fill="none" stroke-linejoin="round"/></svg>
<svg style="left:1269.45px;top:197.55px" width="18.9" height="18.9" viewBox="0 0 24 24"><path d="M7 7V3.6H3.6V17H7" stroke="#444746" stroke-width="1.8" fill="none"/><path d="M3.6 3.6H17.4V7" stroke="#444746" stroke-width="1.8" fill="none"/><rect x="7.4" y="7.4" width="13.6" height="13.6" stroke="#444746" stroke-width="2" fill="none"/><path d="M7.4 12H21M7.4 16.6H21M12 12V21M16.6 12V21" stroke="#444746" stroke-width="1.6"/></svg>
<svg style="left:1293px;top:205.27px" width="7.8" height="4.05" viewBox="0 0 10 5"><path d="M0 0H10L5 5Z" fill="#444746"/></svg>
<span class="t" style="left:1317.6px;top:197.55px;font-size:16.5px;line-height:19.8px;color:#3c4043;transform:scaleX(1.0000);transform-origin:0 50%;-webkit-text-stroke:0.5px #3c4043;">Σ</span>
<svg style="left:1869.6px;top:203.1px" width="11.1" height="6.9" viewBox="0 0 14 9"><path d="M1.4 7.6L7 2L12.6 7.6" stroke="#444746" stroke-width="2" fill="none"/></svg>
<div style="left:0px;top:232.95px;width:1920px;height:29.55px;background:#fff;border-bottom:1px solid #d9dadc;"></div>
<span class="t" style="left:14.4px;top:240.33px;font-size:13.2px;line-height:15.84px;color:#1f1f1f;transform:scaleX(0.9423);transform-origin:0 50%;">D3</span>
<svg style="left:86.25px;top:246.15px" width="7.5" height="3.9" viewBox="0 0 10 5"><path d="M0 0H10L5 5Z" fill="#444746"/></svg>
<div style="left:106.35px;top:240.3px;width:1.2px;height:17.1px;background:#dcdfe3;"></div>
<span class="t" style="left:119.4px;top:239.7px;font-size:14.7px;line-height:17.4px;color:#6a6e73;font-style:italic;font-weight:bold;font-family:'Liberation Serif',serif;">fx</span>
<span class="t" style="left:141.6px;top:241.23px;font-size:12.45px;line-height:14.94px;color:#1f1f1f;transform:scaleX(0.9210);transform-origin:0 50%;">Roxanne</span>
<div style="left:1743px;top:235.5px;width:160.2px;height:21.6px;background:#f0f4f9;border-radius:10.8px;"></div>
<svg style="left:1751.25px;top:240.15px" width="12.9" height="12.9" viewBox="-12 -12 24 24"><path d="M0 -12C1.2 -4.6 4.6 -1.2 12 0C4.6 1.2 1.2 4.6 0 12C-1.2 4.6 -4.6 1.2 -12 0C-4.6 -1.2 -1.2 -4.6 0 -12Z" fill="#1f1f1f"/></svg>
<span class="t" style="left:1770px;top:238.71px;font-size:12.9px;line-height:15.48px;color:#1f1f1f;transform:scaleX(1.0112);transform-origin:0 50%;">Summarize this table</span>
<!-- grid -->
<div id="grid" style="left:0;top:262px;width:1908px;height:720px;overflow:hidden;background:#fff;">
<div style="left:0px;top:93px;width:1908px;height:1px;background:#dbdbdb;"></div>
<div style="left:0px;top:113px;width:1908px;height:1px;background:#dbdbdb;"></div>
<div style="left:0px;top:133px;width:1908px;height:1px;background:#dbdbdb;"></div>
<div style="left:0px;top:153px;width:1908px;height:1px;background:#dbdbdb;"></div>
<div style="left:0px;top:173px;width:1908px;height:1px;background:#dbdbdb;"></div>
<div style="left:0px;top:193px;width:1908px;height:1px;background:#dbdbdb;"></div>
<div style="left:0px;top:213px;width:1908px;height:1px;background:#dbdbdb;"></div>
<div style="left:0px;top:233px;width:1908px;height:1px;background:#dbdbdb;"></div>
<div style="left:0px;top:253px;width:1908px;height:1px;background:#dbdbdb;"></div>
<div style="left:0px;top:273px;width:1908px;height:1px;background:#dbdbdb;"></div>
<div style="left:0px;top:293px;width:1908px;height:1px;background:#dbdbdb;"></div>
<div style="left:0px;top:313px;width:1908px;height:1px;background:#dbdbdb;"></div>
<div style="left:0px;top:333px;width:1908px;height:1px;background:#dbdbdb;"></div>
<div style="left:0px;top:353px;width:1908px;height:1px;background:#dbdbdb;"></div>
<div style="left:0px;top:373px;width:1908px;height:1px;background:#dbdbdb;"></div>
<div style="left:0px;top:393px;width:1908px;height:1px;background:#dbdbdb;"></div>
<div style="left:0px;top:413px;width:1908px;height:1px;background:#dbdbdb;"></div>
<div style="left:0px;top:433px;width:1908px;height:1px;background:#dbdbdb;"></div>
<div style="left:0px;top:453px;width:1908px;height:1px;background:#dbdbdb;"></div>
<div style="left:0px;top:473px;width:1908px;height:1px;background:#dbdbdb;"></div>
<div style="left:0px;top:493px;width:1908px;height:1px;background:#dbdbdb;"></div>
<div style="left:0px;top:513px;width:1908px;height:1px;background:#dbdbdb;"></div>
<div style="left:0px;top:533px;width:1908px;height:1px;background:#dbdbdb;"></div>
<div style="left:0px;top:553px;width:1908px;height:1px;background:#dbdbdb;"></div>
<div style="left:0px;top:573px;width:1908px;height:1px;background:#dbdbdb;"></div>
<div style="left:0px;top:593px;width:1908px;height:1px;background:#dbdbdb;"></div>
<div style="left:0px;top:613px;width:1908px;height:1px;background:#dbdbdb;"></div>
<div style="left:0px;top:633px;width:1908px;height:1px;background:#dbdbdb;"></div>
<div style="left:0px;top:653px;width:1908px;height:1px;background:#dbdbdb;"></div>
<div style="left:0px;top:673px;width:1908px;height:1px;background:#dbdbdb;"></div>
<div style="left:0px;top:693px;width:1908px;height:1px;background:#dbdbdb;"></div>
<div style="left:0px;top:713px;width:1908px;height:1px;background:#dbdbdb;"></div>
<div style="left:0px;top:733px;width:1908px;height:1px;background:#dbdbdb;"></div>
<div style="left:0px;top:753px;width:1908px;height:1px;background:#dbdbdb;"></div>
<div style="left:702px;top:0px;width:1px;height:720px;background:#dbdbdb;"></div>
<div style="left:828px;top:0px;width:1px;height:720px;background:#dbdbdb;"></div>
<div style="left:1108px;top:0px;width:1px;height:720px;background:#dbdbdb;"></div>
<div style="left:1234px;top:0px;width:1px;height:720px;background:#dbdbdb;"></div>
<div style="left:1503px;top:0px;width:1px;height:720px;background:#dbdbdb;"></div>
<div style="left:1567px;top:0px;width:1px;height:720px;background:#dbdbdb;"></div>
<div style="left:1631px;top:0px;width:1px;height:720px;background:#dbdbdb;"></div>
<div style="left:1695px;top:0px;width:1px;height:720px;background:#dbdbdb;"></div>
<div style="left:1759px;top:0px;width:1px;height:720px;background:#dbdbdb;"></div>
<div style="left:1823px;top:0px;width:1px;height:720px;background:#dbdbdb;"></div>
<div style="left:1887px;top:0px;width:1px;height:720px;background:#dbdbdb;"></div>
<div style="left:0px;top:0px;width:1908px;height:24px;background:#fff;"></div>
<div style="left:46px;top:0px;width:657px;height:24px;background:#fff;border-right:1px solid #c3c3c3;border-bottom:1px solid #dedede;"></div>
<div style="left:703px;top:0px;width:126px;height:24px;background:#fff;border-right:1px solid #c3c3c3;border-bottom:1px solid #dedede;"></div>
<div style="left:829px;top:0px;width:280px;height:24px;background:#fff;border-right:1px solid #c3c3c3;border-bottom:1px solid #dedede;"></div>
<div style="left:1109px;top:0px;width:126px;height:24px;background:#d3e3fd;border-right:1px solid #c3c3c3;border-bottom:1px solid #dedede;"></div>
<div style="left:1235px;top:0px;width:269px;height:24px;background:#fff;border-right:1px solid #c3c3c3;border-bottom:1px solid #dedede;"></div>
<div style="left:1504px;top:0px;width:64px;height:24px;background:#fff;border-right:1px solid #c3c3c3;border-bottom:1px solid #dedede;"></div>
<div style="left:1568px;top:0px;width:64px;height:24px;background:#fff;border-right:1px solid #c3c3c3;border-bottom:1px solid #dedede;"></div>
<div style="left:1632px;top:0px;width:64px;height:24px;background:#fff;border-right:1px solid #c3c3c3;border-bottom:1px solid #dedede;"></div>
<div style="left:1696px;top:0px;width:64px;height:24px;background:#fff;border-right:1px solid #c3c3c3;border-bottom:1px solid #dedede;"></div>
<div style="left:1760px;top:0px;width:64px;height:24px;background:#fff;border-right:1px solid #c3c3c3;border-bottom:1px solid #dedede;"></div>
<div style="left:1824px;top:0px;width:64px;height:24px;background:#fff;border-right:1px solid #c3c3c3;border-bottom:1px solid #dedede;"></div>
<div style="left:1888px;top:0px;width:20px;height:24px;background:#fff;border-right:1px solid #c3c3c3;border-bottom:1px solid #dedede;"></div>
<div style="left:0px;top:0px;width:1908px;height:1px;background:#e9e9e9;"></div>
<div style="left:0px;top:0px;width:41px;height:24px;background:#f8f9fa;border-bottom:1px solid #c9c9c9;"></div>
<div style="left:41px;top:0px;width:5px;height:24px;background:#c4c4c4;"></div>
<div style="left:0px;top:24px;width:46px;height:696px;background:#fff;border-right:1px solid #c3c3c3;"></div>
<div style="left:0px;top:24px;width:46px;height:45px;background:#fff;border-right:1px solid #c3c3c3;border-bottom:1px solid #c3c3c3;"></div>
<div style="left:0px;top:74px;width:46px;height:20px;background:#fff;border-right:1px solid #c3c3c3;border-bottom:1px solid #c3c3c3;"></div>
<div style="left:0px;top:94px;width:46px;height:20px;background:#d3e3fd;border-right:1px solid #c3c3c3;border-bottom:1px solid #c3c3c3;"></div>
<div style="left:0px;top:114px;width:46px;height:20px;background:#fff;border-right:1px solid #c3c3c3;border-bottom:1px solid #c3c3c3;"></div>
<div style="left:0px;top:134px;width:46px;height:20px;background:#fff;border-right:1px solid #c3c3c3;border-bottom:1px solid #c3c3c3;"></div>
<div style="left:0px;top:154px;width:46px;height:20px;background:#fff;border-right:1px solid #c3c3c3;border-bottom:1px solid #c3c3c3;"></div>
<div style="left:0px;top:174px;width:46px;height:20px;background:#fff;border-right:1px solid #c3c3c3;border-bottom:1px solid #c3c3c3;"></div>
<div style="left:0px;top:194px;width:46px;height:20px;background:#fff;border-right:1px solid #c3c3c3;border-bottom:1px solid #c3c3c3;"></div>
<div style="left:0px;top:214px;width:46px;height:20px;background:#fff;border-right:1px solid #c3c3c3;border-bottom:1px solid #c3c3c3;"></div>
<div style="left:0px;top:234px;width:46px;height:20px;background:#fff;border-right:1px solid #c3c3c3;border-bottom:1px solid #c3c3c3;"></div>
<div style="left:0px;top:254px;width:46px;height:20px;background:#fff;border-right:1px solid #c3c3c3;border-bottom:1px solid #c3c3c3;"></div>
<div style="left:0px;top:274px;width:46px;height:20px;background:#fff;border-right:1px solid #c3c3c3;border-bottom:1px solid #c3c3c3;"></div>
<div style="left:0px;top:294px;width:46px;height:20px;background:#fff;border-right:1px solid #c3c3c3;border-bottom:1px solid #c3c3c3;"></div>
<div style="left:0px;top:314px;width:46px;height:20px;background:#fff;border-right:1px solid #c3c3c3;border-bottom:1px solid #c3c3c3;"></div>
<div style="left:0px;top:334px;width:46px;height:20px;background:#fff;border-right:1px solid #c3c3c3;border-bottom:1px solid #c3c3c3;"></div>
<div style="left:0px;top:354px;width:46px;height:20px;background:#fff;border-right:1px solid #c3c3c3;border-bottom:1px solid #c3c3c3;"></div>
<div style="left:0px;top:374px;width:46px;height:20px;background:#fff;border-right:1px solid #c3c3c3;border-bottom:1px solid #c3c3c3;"></div>
<div style="left:0px;top:394px;width:46px;height:20px;background:#fff;border-right:1px solid #c3c3c3;border-bottom:1px solid #c3c3c3;"></div>
<div style="left:0px;top:414px;width:46px;height:20px;background:#fff;border-right:1px solid #c3c3c3;border-bottom:1px solid #c3c3c3;"></div>
<div style="left:0px;top:434px;width:46px;height:20px;background:#fff;border-right:1px solid #c3c3c3;border-bottom:1px solid #c3c3c3;"></div>
<div style="left:0px;top:454px;width:46px;height:20px;background:#fff;border-right:1px solid #c3c3c3;border-bottom:1px solid #c3c3c3;"></div>
<div style="left:0px;top:474px;width:46px;height:20px;background:#fff;border-right:1px solid #c3c3c3;border-bottom:1px solid #c3c3c3;"></div>
<div style="left:0px;top:494px;width:46px;height:20px;background:#fff;border-right:1px solid #c3c3c3;border-bottom:1px solid #c3c3c3;"></div>
<div style="left:0px;top:514px;width:46px;height:20px;background:#fff;border-right:1px solid #c3c3c3;border-bottom:1px solid #c3c3c3;"></div>
<div style="left:0px;top:534px;width:46px;height:20px;background:#fff;border-right:1px solid #c3c3c3;border-bottom:1px solid #c3c3c3;"></div>
<div style="left:0px;top:554px;width:46px;height:20px;background:#fff;border-right:1px solid #c3c3c3;border-bottom:1px solid #c3c3c3;"></div>
<div style="left:0px;top:574px;width:46px;height:20px;background:#fff;border-right:1px solid #c3c3c3;border-bottom:1px solid #c3c3c3;"></div>
<div style="left:0px;top:594px;width:46px;height:20px;background:#fff;border-right:1px solid #c3c3c3;border-bottom:1px solid #c3c3c3;"></div>
<div style="left:0px;top:614px;width:46px;height:20px;background:#fff;border-right:1px solid #c3c3c3;border-bottom:1px solid #c3c3c3;"></div>
<div style="left:0px;top:634px;width:46px;height:20px;background:#fff;border-right:1px solid #c3c3c3;border-bottom:1px solid #c3c3c3;"></div>
<div style="left:0px;top:654px;width:46px;height:20px;background:#fff;border-right:1px solid #c3c3c3;border-bottom:1px solid #c3c3c3;"></div>
<div style="left:0px;top:674px;width:46px;height:20px;background:#fff;border-right:1px solid #c3c3c3;border-bottom:1px solid #c3c3c3;"></div>
<div style="left:0px;top:694px;width:46px;height:20px;background:#fff;border-right:1px solid #c3c3c3;border-bottom:1px solid #c3c3c3;"></div>
<div style="left:0px;top:714px;width:46px;height:20px;background:#fff;border-right:1px solid #c3c3c3;border-bottom:1px solid #c3c3c3;"></div>
<div style="left:0px;top:734px;width:46px;height:20px;background:#fff;border-right:1px solid #c3c3c3;border-bottom:1px solid #c3c3c3;"></div>
</div>
<span class="t" style="left:370px;top:267.96px;font-size:10.65px;line-height:12.78px;color:#333;width:9px;text-align:center;-webkit-text-stroke:0.3px currentColor;">A</span>
<span class="t" style="left:761.5px;top:267.96px;font-size:10.65px;line-height:12.78px;color:#333;width:9px;text-align:center;-webkit-text-stroke:0.3px currentColor;">B</span>
<span class="t" style="left:964.5px;top:267.96px;font-size:10.65px;line-height:12.78px;color:#333;width:9px;text-align:center;-webkit-text-stroke:0.3px currentColor;">C</span>
<span class="t" style="left:1167.5px;top:267.96px;font-size:10.65px;line-height:12.78px;color:#0b1f3a;width:9px;text-align:center;-webkit-text-stroke:0.3px currentColor;">D</span>
<span class="t" style="left:1365px;top:267.96px;font-size:10.65px;line-height:12.78px;color:#333;width:9px;text-align:center;-webkit-text-stroke:0.3px currentColor;">E</span>
<span class="t" style="left:1531.5px;top:267.96px;font-size:10.65px;line-height:12.78px;color:#333;width:9px;text-align:center;-webkit-text-stroke:0.3px currentColor;">F</span>
<span class="t" style="left:1595.5px;top:267.96px;font-size:10.65px;line-height:12.78px;color:#333;width:9px;text-align:center;-webkit-text-stroke:0.3px currentColor;">G</span>
<span class="t" style="left:1659.5px;top:267.96px;font-size:10.65px;line-height:12.78px;color:#333;width:9px;text-align:center;-webkit-text-stroke:0.3px currentColor;">H</span>
<span class="t" style="left:1723.5px;top:267.96px;font-size:10.65px;line-height:12.78px;color:#333;width:9px;text-align:center;-webkit-text-stroke:0.3px currentColor;">I</span>
<span class="t" style="left:1787.5px;top:267.96px;font-size:10.65px;line-height:12.78px;color:#333;width:9px;text-align:center;-webkit-text-stroke:0.3px currentColor;">J</span>
<span class="t" style="left:1851.5px;top:267.96px;font-size:10.65px;line-height:12.78px;color:#333;width:9px;text-align:center;-webkit-text-stroke:0.3px currentColor;">K</span>
<span class="t" style="left:13.8px;top:302.83px;font-size:10.95px;line-height:13.14px;color:#333;width:18px;text-align:center;-webkit-text-stroke:0.45px currentColor;">1</span>
<span class="t" style="left:13.8px;top:338.98px;font-size:10.95px;line-height:13.14px;color:#333;width:18px;text-align:center;-webkit-text-stroke:0.45px currentColor;">2</span>
<span class="t" style="left:13.8px;top:358.98px;font-size:10.95px;line-height:13.14px;color:#0b1f3a;width:18px;text-align:center;-webkit-text-stroke:0.45px currentColor;">3</span>
<span class="t" style="left:13.8px;top:378.98px;font-size:10.95px;line-height:13.14px;color:#333;width:18px;text-align:center;-webkit-text-stroke:0.45px currentColor;">4</span>
<span class="t" style="left:13.8px;top:398.98px;font-size:10.95px;line-height:13.14px;color:#333;width:18px;text-align:center;-webkit-text-stroke:0.45px currentColor;">5</span>
<span class="t" style="left:13.8px;top:418.98px;font-size:10.95px;line-height:13.14px;color:#333;width:18px;text-align:center;-webkit-text-stroke:0.45px currentColor;">6</span>
<span class="t" style="left:13.8px;top:438.98px;font-size:10.95px;line-height:13.14px;color:#333;width:18px;text-align:center;-webkit-text-stroke:0.45px currentColor;">7</span>
<span class="t" style="left:13.8px;top:458.98px;font-size:10.95px;line-height:13.14px;color:#333;width:18px;text-align:center;-webkit-text-stroke:0.45px currentColor;">8</span>
<span class="t" style="left:13.8px;top:478.98px;font-size:10.95px;line-height:13.14px;color:#333;width:18px;text-align:center;-webkit-text-stroke:0.45px currentColor;">9</span>
<span class="t" style="left:13.8px;top:498.98px;font-size:10.95px;line-height:13.14px;color:#333;width:18px;text-align:center;-webkit-text-stroke:0.45px currentColor;">10</span>
<span class="t" style="left:13.8px;top:518.98px;font-size:10.95px;line-height:13.14px;color:#333;width:18px;text-align:center;-webkit-text-stroke:0.45px currentColor;">11</span>
<span class="t" style="left:13.8px;top:538.98px;font-size:10.95px;line-height:13.14px;color:#333;width:18px;text-align:center;-webkit-text-stroke:0.45px currentColor;">12</span>
<span class="t" style="left:13.8px;top:558.98px;font-size:10.95px;line-height:13.14px;color:#333;width:18px;text-align:center;-webkit-text-stroke:0.45px currentColor;">13</span>
<span class="t" style="left:13.8px;top:578.98px;font-size:10.95px;line-height:13.14px;color:#333;width:18px;text-align:center;-webkit-text-stroke:0.45px currentColor;">14</span>
<span class="t" style="left:13.8px;top:598.98px;font-size:10.95px;line-height:13.14px;color:#333;width:18px;text-align:center;-webkit-text-stroke:0.45px currentColor;">15</span>
<span class="t" style="left:13.8px;top:618.98px;font-size:10.95px;line-height:13.14px;color:#333;width:18px;text-align:center;-webkit-text-stroke:0.45px currentColor;">16</span>
<span class="t" style="left:13.8px;top:638.98px;font-size:10.95px;line-height:13.14px;color:#333;width:18px;text-align:center;-webkit-text-stroke:0.45px currentColor;">17</span>
<span class="t" style="left:13.8px;top:658.98px;font-size:10.95px;line-height:13.14px;color:#333;width:18px;text-align:center;-webkit-text-stroke:0.45px currentColor;">18</span>
<span class="t" style="left:13.8px;top:678.98px;font-size:10.95px;line-height:13.14px;color:#333;width:18px;text-align:center;-webkit-text-stroke:0.45px currentColor;">19</span>
<span class="t" style="left:13.8px;top:698.98px;font-size:10.95px;line-height:13.14px;color:#333;width:18px;text-align:center;-webkit-text-stroke:0.45px currentColor;">20</span>
<span class="t" style="left:13.8px;top:718.98px;font-size:10.95px;line-height:13.14px;color:#333;width:18px;text-align:center;-webkit-text-stroke:0.45px currentColor;">21</span>
<span class="t" style="left:13.8px;top:738.98px;font-size:10.95px;line-height:13.14px;color:#333;width:18px;text-align:center;-webkit-text-stroke:0.45px currentColor;">22</span>
<span class="t" style="left:13.8px;top:758.98px;font-size:10.95px;line-height:13.14px;color:#333;width:18px;text-align:center;-webkit-text-stroke:0.45px currentColor;">23</span>
<span class="t" style="left:13.8px;top:778.98px;font-size:10.95px;line-height:13.14px;color:#333;width:18px;text-align:center;-webkit-text-stroke:0.45px currentColor;">24</span>
<span class="t" style="left:13.8px;top:798.98px;font-size:10.95px;line-height:13.14px;color:#333;width:18px;text-align:center;-webkit-text-stroke:0.45px currentColor;">25</span>
<span class="t" style="left:13.8px;top:818.98px;font-size:10.95px;line-height:13.14px;color:#333;width:18px;text-align:center;-webkit-text-stroke:0.45px currentColor;">26</span>
<span class="t" style="left:13.8px;top:838.98px;font-size:10.95px;line-height:13.14px;color:#333;width:18px;text-align:center;-webkit-text-stroke:0.45px currentColor;">27</span>
<span class="t" style="left:13.8px;top:858.98px;font-size:10.95px;line-height:13.14px;color:#333;width:18px;text-align:center;-webkit-text-stroke:0.45px currentColor;">28</span>
<span class="t" style="left:13.8px;top:878.98px;font-size:10.95px;line-height:13.14px;color:#333;width:18px;text-align:center;-webkit-text-stroke:0.45px currentColor;">29</span>
<span class="t" style="left:13.8px;top:898.98px;font-size:10.95px;line-height:13.14px;color:#333;width:18px;text-align:center;-webkit-text-stroke:0.45px currentColor;">30</span>
<span class="t" style="left:13.8px;top:918.98px;font-size:10.95px;line-height:13.14px;color:#333;width:18px;text-align:center;-webkit-text-stroke:0.45px currentColor;">31</span>
<span class="t" style="left:13.8px;top:938.98px;font-size:10.95px;line-height:13.14px;color:#333;width:18px;text-align:center;-webkit-text-stroke:0.45px currentColor;">32</span>
<span class="t" style="left:13.8px;top:958.98px;font-size:10.95px;line-height:13.14px;color:#333;width:18px;text-align:center;-webkit-text-stroke:0.45px currentColor;">33</span>
<div id="cells" style="left:0;top:0;width:1908px;height:982px;overflow:hidden;">
<div style="left:46px;top:286px;width:1189px;height:46px;background:#4271c1;"></div>
<div style="left:1235px;top:286px;width:269px;height:46px;background:#9bbb59;"></div>
<div style="left:702px;top:286px;width:1px;height:45px;background:#000;"></div>
<div style="left:828px;top:286px;width:1px;height:45px;background:#000;"></div>
<div style="left:1108px;top:286px;width:1px;height:45px;background:#000;"></div>
<div style="left:1234px;top:286px;width:1px;height:45px;background:#000;"></div>
<div style="left:1503px;top:286px;width:1px;height:45px;background:#000;"></div>
<div style="left:46px;top:330px;width:1458px;height:1px;background:#000;opacity:.55;"></div>
<div style="left:0px;top:332px;width:1908px;height:4px;background:#c9c9c9;"></div>
<div style="left:46px;top:336px;width:1189px;height:646px;background:#fff;"></div>
<div style="left:46px;top:335.5px;width:1189px;height:20.5px;background:#d8e0f1;"></div>
<div style="left:703px;top:355.5px;width:125.5px;height:20px;background:#d4edbc;"></div>
<div style="left:703px;top:375.5px;width:125.5px;height:20px;background:#fdcfc9;"></div>
<div style="left:703px;top:395.5px;width:125.5px;height:20px;background:#fdcfc9;"></div>
<div style="left:703px;top:415.5px;width:125.5px;height:20px;background:#fdcfc9;"></div>
<div style="left:703px;top:435.5px;width:125.5px;height:20px;background:#fdcfc9;"></div>
<div style="left:703px;top:455.5px;width:125.5px;height:20px;background:#fdcfc9;"></div>
<div style="left:46px;top:475.5px;width:1189px;height:20.5px;background:#d8e0f1;"></div>
<div style="left:703px;top:495.5px;width:125.5px;height:20px;background:#fdcfc9;"></div>
<div style="left:703px;top:515.5px;width:125.5px;height:20px;background:#fdcfc9;"></div>
<div style="left:703px;top:535.5px;width:125.5px;height:20px;background:#fdcfc9;"></div>
<div style="left:703px;top:555.5px;width:125.5px;height:20px;background:#fdcfc9;"></div>
<div style="left:703px;top:575.5px;width:125.5px;height:20px;background:#fdcfc9;"></div>
<div style="left:46px;top:595.5px;width:1189px;height:20.5px;background:#d8e0f1;"></div>
<div style="left:703px;top:615.5px;width:125.5px;height:20px;background:#fdcfc9;"></div>
<div style="left:703px;top:635.5px;width:125.5px;height:20px;background:#fdcfc9;"></div>
<div style="left:703px;top:655.5px;width:125.5px;height:20px;background:#fdcfc9;"></div>
<div style="left:703px;top:675.5px;width:125.5px;height:20px;background:#fdcfc9;"></div>
<div style="left:703px;top:695.5px;width:125.5px;height:20px;background:#fdcfc9;"></div>
<div style="left:703px;top:715.5px;width:125.5px;height:20px;background:#fdcfc9;"></div>
<div style="left:46px;top:735.5px;width:1189px;height:20.5px;background:#d8e0f1;"></div>
<div style="left:703px;top:755.5px;width:125.5px;height:20px;background:#fdcfc9;"></div>
<div style="left:703px;top:775.5px;width:125.5px;height:20px;background:#fdcfc9;"></div>
<div style="left:703px;top:795.5px;width:125.5px;height:20px;background:#fdcfc9;"></div>
<div style="left:703px;top:815.5px;width:125.5px;height:20px;background:#fdcfc9;"></div>
<div style="left:703px;top:835.5px;width:125.5px;height:20px;background:#fdcfc9;"></div>
<div style="left:46px;top:855.5px;width:1189px;height:20.5px;background:#d8e0f1;"></div>
<div style="left:703px;top:875.5px;width:125.5px;height:20px;background:#fdcfc9;"></div>
<div style="left:703px;top:895.5px;width:125.5px;height:20px;background:#fdcfc9;"></div>
<div style="left:703px;top:915.5px;width:125.5px;height:20px;background:#fdcfc9;"></div>
<div style="left:703px;top:935.5px;width:125.5px;height:20px;background:#fdcfc9;"></div>
<div style="left:703px;top:955.5px;width:125.5px;height:20px;background:#fdcfc9;"></div>
<div style="left:46px;top:975.5px;width:1189px;height:20.5px;background:#d8e0f1;"></div>
<div style="left:46px;top:354.94px;width:1189px;height:1.1px;background:#000;"></div>
<div style="left:46px;top:374.94px;width:1189px;height:1.1px;background:#000;"></div>
<div style="left:702px;top:356px;width:1px;height:20px;background:#000;"></div>
<div style="left:828px;top:356px;width:1px;height:20px;background:#000;"></div>
<div style="left:1108px;top:356px;width:1px;height:20px;background:#000;"></div>
<div style="left:46px;top:394.94px;width:1189px;height:1.1px;background:#000;"></div>
<div style="left:702px;top:376px;width:1px;height:20px;background:#000;"></div>
<div style="left:828px;top:376px;width:1px;height:20px;background:#000;"></div>
<div style="left:1108px;top:376px;width:1px;height:20px;background:#000;"></div>
<div style="left:46px;top:414.94px;width:1189px;height:1.1px;background:#000;"></div>
<div style="left:702px;top:396px;width:1px;height:20px;background:#000;"></div>
<div style="left:828px;top:396px;width:1px;height:20px;background:#000;"></div>
<div style="left:1108px;top:396px;width:1px;height:20px;background:#000;"></div>
<div style="left:46px;top:434.94px;width:1189px;height:1.1px;background:#000;"></div>
<div style="left:702px;top:416px;width:1px;height:20px;background:#000;"></div>
<div style="left:828px;top:416px;width:1px;height:20px;background:#000;"></div>
<div style="left:1108px;top:416px;width:1px;height:20px;background:#000;"></div>
<div style="left:46px;top:454.94px;width:1189px;height:1.1px;background:#000;"></div>
<div style="left:702px;top:436px;width:1px;height:20px;background:#000;"></div>
<div style="left:828px;top:436px;width:1px;height:20px;background:#000;"></div>
<div style="left:1108px;top:436px;width:1px;height:20px;background:#000;"></div>
<div style="left:46px;top:474.94px;width:1189px;height:1.1px;background:#000;"></div>
<div style="left:702px;top:456px;width:1px;height:20px;background:#000;"></div>
<div style="left:828px;top:456px;width:1px;height:20px;background:#000;"></div>
<div style="left:1108px;top:456px;width:1px;height:20px;background:#000;"></div>
<div style="left:46px;top:494.94px;width:1189px;height:1.1px;background:#000;"></div>
<div style="left:46px;top:514.94px;width:1189px;height:1.1px;background:#000;"></div>
<div style="left:702px;top:496px;width:1px;height:20px;background:#000;"></div>
<div style="left:828px;top:496px;width:1px;height:20px;background:#000;"></div>
<div style="left:1108px;top:496px;width:1px;height:20px;background:#000;"></div>
<div style="left:46px;top:534.94px;width:1189px;height:1.1px;background:#000;"></div>
<div style="left:702px;top:516px;width:1px;height:20px;background:#000;"></div>
<div style="left:828px;top:516px;width:1px;height:20px;background:#000;"></div>
<div style="left:1108px;top:516px;width:1px;height:20px;background:#000;"></div>
<div style="left:46px;top:554.94px;width:1189px;height:1.1px;background:#000;"></div>
<div style="left:702px;top:536px;width:1px;height:20px;background:#000;"></div>
<div style="left:828px;top:536px;width:1px;height:20px;background:#000;"></div>
<div style="left:1108px;top:536px;width:1px;height:20px;background:#000;"></div>
<div style="left:46px;top:574.94px;width:1189px;height:1.1px;background:#000;"></div>
<div style="left:702px;top:556px;width:1px;height:20px;background:#000;"></div>
<div style="left:828px;top:556px;width:1px;height:20px;background:#000;"></div>
<div style="left:1108px;top:556px;width:1px;height:20px;background:#000;"></div>
<div style="left:46px;top:594.94px;width:1189px;height:1.1px;background:#000;"></div>
<div style="left:702px;top:576px;width:1px;height:20px;background:#000;"></div>
<div style="left:828px;top:576px;width:1px;height:20px;background:#000;"></div>
<div style="left:1108px;top:576px;width:1px;height:20px;background:#000;"></div>
<div style="left:46px;top:614.94px;width:1189px;height:1.1px;background:#000;"></div>
<div style="left:46px;top:634.94px;width:1189px;height:1.1px;background:#000;"></div>
<div style="left:702px;top:616px;width:1px;height:20px;background:#000;"></div>
<div style="left:828px;top:616px;width:1px;height:20px;background:#000;"></div>
<div style="left:1108px;top:616px;width:1px;height:20px;background:#000;"></div>
<div style="left:46px;top:654.94px;width:1189px;height:1.1px;background:#000;"></div>
<div style="left:702px;top:636px;width:1px;height:20px;background:#000;"></div>
<div style="left:828px;top:636px;width:1px;height:20px;background:#000;"></div>
<div style="left:1108px;top:636px;width:1px;height:20px;background:#000;"></div>
<div style="left:46px;top:674.94px;width:1189px;height:1.1px;background:#000;"></div>
<div style="left:702px;top:656px;width:1px;height:20px;background:#000;"></div>
<div style="left:828px;top:656px;width:1px;height:20px;background:#000;"></div>
<div style="left:1108px;top:656px;width:1px;height:20px;background:#000;"></div>
<div style="left:46px;top:694.94px;width:1189px;height:1.1px;background:#000;"></div>
<div style="left:702px;top:676px;width:1px;height:20px;background:#000;"></div>
<div style="left:828px;top:676px;width:1px;height:20px;background:#000;"></div>
<div style="left:1108px;top:676px;width:1px;height:20px;background:#000;"></div>
<div style="left:46px;top:714.94px;width:1189px;height:1.1px;background:#000;"></div>
<div style="left:702px;top:696px;width:1px;height:20px;background:#000;"></div>
<div style="left:828px;top:696px;width:1px;height:20px;background:#000;"></div>
<div style="left:1108px;top:696px;width:1px;height:20px;background:#000;"></div>
<div style="left:46px;top:734.94px;width:1189px;height:1.1px;background:#000;"></div>
<div style="left:702px;top:716px;width:1px;height:20px;background:#000;"></div>
<div style="left:828px;top:716px;width:1px;height:20px;background:#000;"></div>
<div style="left:1108px;top:716px;width:1px;height:20px;background:#000;"></div>
<div style="left:46px;top:754.94px;width:1189px;height:1.1px;background:#000;"></div>
<div style="left:46px;top:774.94px;width:1189px;height:1.1px;background:#000;"></div>
<div style="left:702px;top:756px;width:1px;height:20px;background:#000;"></div>
<div style="left:828px;top:756px;width:1px;height:20px;background:#000;"></div>
<div style="left:1108px;top:756px;width:1px;height:20px;background:#000;"></div>
<div style="left:46px;top:794.94px;width:1189px;height:1.1px;background:#000;"></div>
<div style="left:702px;top:776px;width:1px;height:20px;background:#000;"></div>
<div style="left:828px;top:776px;width:1px;height:20px;background:#000;"></div>
<div style="left:1108px;top:776px;width:1px;height:20px;background:#000;"></div>
<div style="left:46px;top:814.94px;width:1189px;height:1.1px;background:#000;"></div>
<div style="left:702px;top:796px;width:1px;height:20px;background:#000;"></div>
<div style="left:828px;top:796px;width:1px;height:20px;background:#000;"></div>
<div style="left:1108px;top:796px;width:1px;height:20px;background:#000;"></div>
<div style="left:46px;top:834.94px;width:1189px;height:1.1px;background:#000;"></div>
<div style="left:702px;top:816px;width:1px;height:20px;background:#000;"></div>
<div style="left:828px;top:816px;width:1px;height:20px;background:#000;"></div>
<div style="left:1108px;top:816px;width:1px;height:20px;background:#000;"></div>
<div style="left:46px;top:854.94px;width:1189px;height:1.1px;background:#000;"></div>
<div style="left:702px;top:836px;width:1px;height:20px;background:#000;"></div>
<div style="left:828px;top:836px;width:1px;height:20px;background:#000;"></div>
<div style="left:1108px;top:836px;width:1px;height:20px;background:#000;"></div>
<div style="left:46px;top:874.94px;width:1189px;height:1.1px;background:#000;"></div>
<div style="left:46px;top:894.94px;width:1189px;height:1.1px;background:#000;"></div>
<div style="left:702px;top:876px;width:1px;height:20px;background:#000;"></div>
<div style="left:828px;top:876px;width:1px;height:20px;background:#000;"></div>
<div style="left:1108px;top:876px;width:1px;height:20px;background:#000;"></div>
<div style="left:46px;top:914.94px;width:1189px;height:1.1px;background:#000;"></div>
<div style="left:702px;top:896px;width:1px;height:20px;background:#000;"></div>
<div style="left:828px;top:896px;width:1px;height:20px;background:#000;"></div>
<div style="left:1108px;top:896px;width:1px;height:20px;background:#000;"></div>
<div style="left:46px;top:934.94px;width:1189px;height:1.1px;background:#000;"></div>
<div style="left:702px;top:916px;width:1px;height:20px;background:#000;"></div>
<div style="left:828px;top:916px;width:1px;height:20px;background:#000;"></div>
<div style="left:1108px;top:916px;width:1px;height:20px;background:#000;"></div>
<div style="left:46px;top:954.94px;width:1189px;height:1.1px;background:#000;"></div>
<div style="left:702px;top:936px;width:1px;height:20px;background:#000;"></div>
<div style="left:828px;top:936px;width:1px;height:20px;background:#000;"></div>
<div style="left:1108px;top:936px;width:1px;height:20px;background:#000;"></div>
<div style="left:46px;top:974.94px;width:1189px;height:1.1px;background:#000;"></div>
<div style="left:702px;top:956px;width:1px;height:20px;background:#000;"></div>
<div style="left:828px;top:956px;width:1px;height:20px;background:#000;"></div>
<div style="left:1108px;top:956px;width:1px;height:20px;background:#000;"></div>
<div style="left:46px;top:994.94px;width:1189px;height:1.1px;background:#000;"></div>
<div style="left:1234px;top:336px;width:1px;height:646px;background:#000;"></div>
<div style="left:46px;top:336px;width:1px;height:646px;background:#000;opacity:.35;"></div>
</div>
<span class="t" style="left:49.2px;top:338.21px;font-size:13.35px;line-height:16.02px;color:#000;font-weight:bold;transform:scaleX(0.9653);transform-origin:0 50%;">Header Section (Menu Bar)</span>
<span class="t" style="left:49.2px;top:358.22px;font-size:13.35px;line-height:16.02px;color:#000;transform:scaleX(1.0145);transform-origin:0 50%;-webkit-text-stroke:0.22px #000;">Menu bar with Logo (sticky)</span>
<svg style="left:706.8px;top:360.08px" width="11.7" height="11.7" viewBox="0 0 12 12"><rect x="0.9" y="0.9" width="10.2" height="10.2" fill="none" stroke="#11734b" stroke-width="1.15" opacity="1"/><path d="M2.8 6.3 L5 8.6 L9.3 3" fill="none" stroke="#11734b" stroke-width="1.5"/></svg>
<span class="t" style="left:722.4px;top:358.22px;font-size:13.35px;line-height:16.02px;color:#11734b;transform:scaleX(0.9976);transform-origin:0 50%;">Complete</span>
<svg style="left:813.9px;top:363.83px" width="8.1" height="4.2" viewBox="0 0 10 5"><path d="M0 0H10L5 5Z" fill="#4f9a3c"/></svg>
<svg style="left:1219.95px;top:363.83px" width="8.1" height="4.2" viewBox="0 0 10 5"><path d="M0 0H10L5 5Z" fill="#747679"/></svg>
<span class="t" style="left:49.2px;top:378.21px;font-size:13.35px;line-height:16.02px;color:#000;transform:scaleX(1.0113);transform-origin:0 50%;-webkit-text-stroke:0.22px #000;">Verify logo is correct and high resolution</span>
<svg style="left:706.8px;top:380.07px" width="11.7" height="11.7" viewBox="0 0 12 12"><rect x="0.9" y="0.9" width="10.2" height="10.2" fill="none" stroke="#a81414" stroke-width="1.15" opacity="0.72"/></svg>
<span class="t" style="left:722.4px;top:378.21px;font-size:13.35px;line-height:16.02px;color:#a81414;transform:scaleX(0.9996);transform-origin:0 50%;">Not Started</span>
<svg style="left:1219.95px;top:383.82px" width="8.1" height="4.2" viewBox="0 0 10 5"><path d="M0 0H10L5 5Z" fill="#747679"/></svg>
<span class="t" style="left:49.2px;top:398.22px;font-size:13.35px;line-height:16.02px;color:#000;transform:scaleX(0.9906);transform-origin:0 50%;-webkit-text-stroke:0.22px #000;">Phone Number is displayed, accurate, and clickable</span>
<svg style="left:706.8px;top:400.07px" width="11.7" height="11.7" viewBox="0 0 12 12"><rect x="0.9" y="0.9" width="10.2" height="10.2" fill="none" stroke="#a81414" stroke-width="1.15" opacity="0.72"/></svg>
<span class="t" style="left:722.4px;top:398.22px;font-size:13.35px;line-height:16.02px;color:#a81414;transform:scaleX(0.9996);transform-origin:0 50%;">Not Started</span>
<svg style="left:813.9px;top:403.82px" width="8.1" height="4.2" viewBox="0 0 10 5"><path d="M0 0H10L5 5Z" fill="#c5221f"/></svg>
<svg style="left:1219.95px;top:403.82px" width="8.1" height="4.2" viewBox="0 0 10 5"><path d="M0 0H10L5 5Z" fill="#747679"/></svg>
<span class="t" style="left:49.2px;top:418.22px;font-size:13.35px;line-height:16.02px;color:#000;transform:scaleX(0.9910);transform-origin:0 50%;-webkit-text-stroke:0.22px #000;">Address displayed, accurate, and clickable (if applicable)</span>
<svg style="left:706.8px;top:420.07px" width="11.7" height="11.7" viewBox="0 0 12 12"><rect x="0.9" y="0.9" width="10.2" height="10.2" fill="none" stroke="#a81414" stroke-width="1.15" opacity="0.72"/></svg>
<span class="t" style="left:722.4px;top:418.22px;font-size:13.35px;line-height:16.02px;color:#a81414;transform:scaleX(0.9996);transform-origin:0 50%;">Not Started</span>
<svg style="left:813.9px;top:423.82px" width="8.1" height="4.2" viewBox="0 0 10 5"><path d="M0 0H10L5 5Z" fill="#c5221f"/></svg>
<svg style="left:1219.95px;top:423.82px" width="8.1" height="4.2" viewBox="0 0 10 5"><path d="M0 0H10L5 5Z" fill="#747679"/></svg>
<span class="t" style="left:49.2px;top:438.21px;font-size:13.35px;line-height:16.02px;color:#000;transform:scaleX(1.0128);transform-origin:0 50%;-webkit-text-stroke:0.22px #000;">Verify CTA button is prominently displayed and functional</span>
<svg style="left:706.8px;top:440.07px" width="11.7" height="11.7" viewBox="0 0 12 12"><rect x="0.9" y="0.9" width="10.2" height="10.2" fill="none" stroke="#a81414" stroke-width="1.15" opacity="0.72"/></svg>
<span class="t" style="left:722.4px;top:438.21px;font-size:13.35px;line-height:16.02px;color:#a81414;transform:scaleX(0.9996);transform-origin:0 50%;">Not Started</span>
<svg style="left:813.9px;top:443.82px" width="8.1" height="4.2" viewBox="0 0 10 5"><path d="M0 0H10L5 5Z" fill="#c5221f"/></svg>
<svg style="left:1219.95px;top:443.82px" width="8.1" height="4.2" viewBox="0 0 10 5"><path d="M0 0H10L5 5Z" fill="#747679"/></svg>
<span class="t" style="left:49.2px;top:458.22px;font-size:13.35px;line-height:16.02px;color:#000;transform:scaleX(1.0122);transform-origin:0 50%;-webkit-text-stroke:0.22px #000;">All header elements correctly positioned and visible</span>
<svg style="left:706.8px;top:460.07px" width="11.7" height="11.7" viewBox="0 0 12 12"><rect x="0.9" y="0.9" width="10.2" height="10.2" fill="none" stroke="#a81414" stroke-width="1.15" opacity="0.72"/></svg>
<span class="t" style="left:722.4px;top:458.22px;font-size:13.35px;line-height:16.02px;color:#a81414;transform:scaleX(0.9996);transform-origin:0 50%;">Not Started</span>
<svg style="left:813.9px;top:463.82px" width="8.1" height="4.2" viewBox="0 0 10 5"><path d="M0 0H10L5 5Z" fill="#c5221f"/></svg>
<svg style="left:1219.95px;top:463.82px" width="8.1" height="4.2" viewBox="0 0 10 5"><path d="M0 0H10L5 5Z" fill="#747679"/></svg>
<span class="t" style="left:49.2px;top:478.22px;font-size:13.35px;line-height:16.02px;color:#000;font-weight:bold;transform:scaleX(0.9492);transform-origin:0 50%;">Above-the-Fold Hero Section</span>
<span class="t" style="left:49.2px;top:498.21px;font-size:13.35px;line-height:16.02px;color:#000;transform:scaleX(0.9964);transform-origin:0 50%;-webkit-text-stroke:0.22px #000;">Clean high-resolution Hero Image</span>
<svg style="left:706.8px;top:500.07px" width="11.7" height="11.7" viewBox="0 0 12 12"><rect x="0.9" y="0.9" width="10.2" height="10.2" fill="none" stroke="#a81414" stroke-width="1.15" opacity="0.72"/></svg>
<span class="t" style="left:722.4px;top:498.21px;font-size:13.35px;line-height:16.02px;color:#a81414;transform:scaleX(0.9996);transform-origin:0 50%;">Not Started</span>
<svg style="left:813.9px;top:503.82px" width="8.1" height="4.2" viewBox="0 0 10 5"><path d="M0 0H10L5 5Z" fill="#c5221f"/></svg>
<svg style="left:1219.95px;top:503.82px" width="8.1" height="4.2" viewBox="0 0 10 5"><path d="M0 0H10L5 5Z" fill="#747679"/></svg>
<span class="t" style="left:49.2px;top:518.22px;font-size:13.35px;line-height:16.02px;color:#000;transform:scaleX(1.0152);transform-origin:0 50%;-webkit-text-stroke:0.22px #000;">Image aligns with client&#x27;s industry</span>
<svg style="left:706.8px;top:520.07px" width="11.7" height="11.7" viewBox="0 0 12 12"><rect x="0.9" y="0.9" width="10.2" height="10.2" fill="none" stroke="#a81414" stroke-width="1.15" opacity="0.72"/></svg>
<span class="t" style="left:722.4px;top:518.22px;font-size:13.35px;line-height:16.02px;color:#a81414;transform:scaleX(0.9996);transform-origin:0 50%;">Not Started</span>
<svg style="left:813.9px;top:523.82px" width="8.1" height="4.2" viewBox="0 0 10 5"><path d="M0 0H10L5 5Z" fill="#c5221f"/></svg>
<svg style="left:1219.95px;top:523.82px" width="8.1" height="4.2" viewBox="0 0 10 5"><path d="M0 0H10L5 5Z" fill="#747679"/></svg>
<span class="t" style="left:49.2px;top:538.22px;font-size:13.35px;line-height:16.02px;color:#000;transform:scaleX(0.9906);transform-origin:0 50%;-webkit-text-stroke:0.22px #000;">Headline and subheadline are clear, concise, and readable</span>
<svg style="left:706.8px;top:540.07px" width="11.7" height="11.7" viewBox="0 0 12 12"><rect x="0.9" y="0.9" width="10.2" height="10.2" fill="none" stroke="#a81414" stroke-width="1.15" opacity="0.72"/></svg>
<span class="t" style="left:722.4px;top:538.22px;font-size:13.35px;line-height:16.02px;color:#a81414;transform:scaleX(0.9996);transform-origin:0 50%;">Not Started</span>
<svg style="left:813.9px;top:543.82px" width="8.1" height="4.2" viewBox="0 0 10 5"><path d="M0 0H10L5 5Z" fill="#c5221f"/></svg>
<svg style="left:1219.95px;top:543.82px" width="8.1" height="4.2" viewBox="0 0 10 5"><path d="M0 0H10L5 5Z" fill="#747679"/></svg>
<span class="t" style="left:49.2px;top:558.21px;font-size:13.35px;line-height:16.02px;color:#000;transform:scaleX(1.0104);transform-origin:0 50%;-webkit-text-stroke:0.22px #000;">CTA button prominently displayed</span>
<svg style="left:706.8px;top:560.07px" width="11.7" height="11.7" viewBox="0 0 12 12"><rect x="0.9" y="0.9" width="10.2" height="10.2" fill="none" stroke="#a81414" stroke-width="1.15" opacity="0.72"/></svg>
<span class="t" style="left:722.4px;top:558.21px;font-size:13.35px;line-height:16.02px;color:#a81414;transform:scaleX(0.9996);transform-origin:0 50%;">Not Started</span>
<svg style="left:813.9px;top:563.82px" width="8.1" height="4.2" viewBox="0 0 10 5"><path d="M0 0H10L5 5Z" fill="#c5221f"/></svg>
<svg style="left:1219.95px;top:563.82px" width="8.1" height="4.2" viewBox="0 0 10 5"><path d="M0 0H10L5 5Z" fill="#747679"/></svg>
<span class="t" style="left:49.2px;top:578.22px;font-size:13.35px;line-height:16.02px;color:#000;transform:scaleX(1.0117);transform-origin:0 50%;-webkit-text-stroke:0.22px #000;">Testimonial block included</span>
<svg style="left:706.8px;top:580.07px" width="11.7" height="11.7" viewBox="0 0 12 12"><rect x="0.9" y="0.9" width="10.2" height="10.2" fill="none" stroke="#a81414" stroke-width="1.15" opacity="0.72"/></svg>
<span class="t" style="left:722.4px;top:578.22px;font-size:13.35px;line-height:16.02px;color:#a81414;transform:scaleX(0.9996);transform-origin:0 50%;">Not Started</span>
<svg style="left:813.9px;top:583.82px" width="8.1" height="4.2" viewBox="0 0 10 5"><path d="M0 0H10L5 5Z" fill="#c5221f"/></svg>
<svg style="left:1219.95px;top:583.82px" width="8.1" height="4.2" viewBox="0 0 10 5"><path d="M0 0H10L5 5Z" fill="#747679"/></svg>
<span class="t" style="left:49.2px;top:598.22px;font-size:13.35px;line-height:16.02px;color:#000;font-weight:bold;transform:scaleX(0.9411);transform-origin:0 50%;">Proof Banner/Social Proof Counts Section</span>
<span class="t" style="left:49.2px;top:618.21px;font-size:13.35px;line-height:16.02px;color:#000;transform:scaleX(0.9859);transform-origin:0 50%;-webkit-text-stroke:0.22px #000;">Proof Banner Exists (Company/Associations/College Logos/Social Proof Numbers)</span>
<svg style="left:706.8px;top:620.07px" width="11.7" height="11.7" viewBox="0 0 12 12"><rect x="0.9" y="0.9" width="10.2" height="10.2" fill="none" stroke="#a81414" stroke-width="1.15" opacity="0.72"/></svg>
<span class="t" style="left:722.4px;top:618.21px;font-size:13.35px;line-height:16.02px;color:#a81414;transform:scaleX(0.9996);transform-origin:0 50%;">Not Started</span>
<svg style="left:813.9px;top:623.82px" width="8.1" height="4.2" viewBox="0 0 10 5"><path d="M0 0H10L5 5Z" fill="#c5221f"/></svg>
<svg style="left:1219.95px;top:623.82px" width="8.1" height="4.2" viewBox="0 0 10 5"><path d="M0 0H10L5 5Z" fill="#747679"/></svg>
<span class="t" style="left:49.2px;top:638.22px;font-size:13.35px;line-height:16.02px;color:#000;transform:scaleX(0.9841);transform-origin:0 50%;-webkit-text-stroke:0.22px #000;">Logos are credible and recognizable</span>
<svg style="left:706.8px;top:640.07px" width="11.7" height="11.7" viewBox="0 0 12 12"><rect x="0.9" y="0.9" width="10.2" height="10.2" fill="none" stroke="#a81414" stroke-width="1.15" opacity="0.72"/></svg>
<span class="t" style="left:722.4px;top:638.22px;font-size:13.35px;line-height:16.02px;color:#a81414;transform:scaleX(0.9996);transform-origin:0 50%;">Not Started</span>
<svg style="left:813.9px;top:643.82px" width="8.1" height="4.2" viewBox="0 0 10 5"><path d="M0 0H10L5 5Z" fill="#c5221f"/></svg>
<svg style="left:1219.95px;top:643.82px" width="8.1" height="4.2" viewBox="0 0 10 5"><path d="M0 0H10L5 5Z" fill="#747679"/></svg>
<span class="t" style="left:49.2px;top:658.22px;font-size:13.35px;line-height:16.02px;color:#000;transform:scaleX(0.9965);transform-origin:0 50%;-webkit-text-stroke:0.22px #000;">Logos are high resolution</span>
<svg style="left:706.8px;top:660.07px" width="11.7" height="11.7" viewBox="0 0 12 12"><rect x="0.9" y="0.9" width="10.2" height="10.2" fill="none" stroke="#a81414" stroke-width="1.15" opacity="0.72"/></svg>
<span class="t" style="left:722.4px;top:658.22px;font-size:13.35px;line-height:16.02px;color:#a81414;transform:scaleX(0.9996);transform-origin:0 50%;">Not Started</span>
<svg style="left:813.9px;top:663.82px" width="8.1" height="4.2" viewBox="0 0 10 5"><path d="M0 0H10L5 5Z" fill="#c5221f"/></svg>
<svg style="left:1219.95px;top:663.82px" width="8.1" height="4.2" viewBox="0 0 10 5"><path d="M0 0H10L5 5Z" fill="#747679"/></svg>
<span class="t" style="left:49.2px;top:678.21px;font-size:13.35px;line-height:16.02px;color:#000;transform:scaleX(0.9884);transform-origin:0 50%;-webkit-text-stroke:0.22px #000;">Proof Banner - Social Proofs/Counts</span>
<svg style="left:706.8px;top:680.07px" width="11.7" height="11.7" viewBox="0 0 12 12"><rect x="0.9" y="0.9" width="10.2" height="10.2" fill="none" stroke="#a81414" stroke-width="1.15" opacity="0.72"/></svg>
<span class="t" style="left:722.4px;top:678.21px;font-size:13.35px;line-height:16.02px;color:#a81414;transform:scaleX(0.9996);transform-origin:0 50%;">Not Started</span>
<svg style="left:813.9px;top:683.82px" width="8.1" height="4.2" viewBox="0 0 10 5"><path d="M0 0H10L5 5Z" fill="#c5221f"/></svg>
<svg style="left:1219.95px;top:683.82px" width="8.1" height="4.2" viewBox="0 0 10 5"><path d="M0 0H10L5 5Z" fill="#747679"/></svg>
<span class="t" style="left:49.2px;top:698.22px;font-size:13.35px;line-height:16.02px;color:#000;transform:scaleX(0.9953);transform-origin:0 50%;-webkit-text-stroke:0.22px #000;">Social proof numbers are accurate</span>
<svg style="left:706.8px;top:700.07px" width="11.7" height="11.7" viewBox="0 0 12 12"><rect x="0.9" y="0.9" width="10.2" height="10.2" fill="none" stroke="#a81414" stroke-width="1.15" opacity="0.72"/></svg>
<span class="t" style="left:722.4px;top:698.22px;font-size:13.35px;line-height:16.02px;color:#a81414;transform:scaleX(0.9996);transform-origin:0 50%;">Not Started</span>
<svg style="left:813.9px;top:703.82px" width="8.1" height="4.2" viewBox="0 0 10 5"><path d="M0 0H10L5 5Z" fill="#c5221f"/></svg>
<svg style="left:1219.95px;top:703.82px" width="8.1" height="4.2" viewBox="0 0 10 5"><path d="M0 0H10L5 5Z" fill="#747679"/></svg>
<span class="t" style="left:49.2px;top:718.22px;font-size:13.35px;line-height:16.02px;color:#000;transform:scaleX(1.0015);transform-origin:0 50%;-webkit-text-stroke:0.22px #000;">Social proof is compelling and relevant</span>
<svg style="left:706.8px;top:720.07px" width="11.7" height="11.7" viewBox="0 0 12 12"><rect x="0.9" y="0.9" width="10.2" height="10.2" fill="none" stroke="#a81414" stroke-width="1.15" opacity="0.72"/></svg>
<span class="t" style="left:722.4px;top:718.22px;font-size:13.35px;line-height:16.02px;color:#a81414;transform:scaleX(0.9996);transform-origin:0 50%;">Not Started</span>
<svg style="left:813.9px;top:723.82px" width="8.1" height="4.2" viewBox="0 0 10 5"><path d="M0 0H10L5 5Z" fill="#c5221f"/></svg>
<svg style="left:1219.95px;top:723.82px" width="8.1" height="4.2" viewBox="0 0 10 5"><path d="M0 0H10L5 5Z" fill="#747679"/></svg>
<span class="t" style="left:49.2px;top:738.21px;font-size:13.35px;line-height:16.02px;color:#000;font-weight:bold;transform:scaleX(0.9438);transform-origin:0 50%;">Case Study/Testimonial Section</span>
<span class="t" style="left:49.2px;top:758.22px;font-size:13.35px;line-height:16.02px;color:#000;transform:scaleX(1.0037);transform-origin:0 50%;-webkit-text-stroke:0.22px #000;">Case study/Testimonial section included</span>
<svg style="left:706.8px;top:760.07px" width="11.7" height="11.7" viewBox="0 0 12 12"><rect x="0.9" y="0.9" width="10.2" height="10.2" fill="none" stroke="#a81414" stroke-width="1.15" opacity="0.72"/></svg>
<span class="t" style="left:722.4px;top:758.22px;font-size:13.35px;line-height:16.02px;color:#a81414;transform:scaleX(0.9996);transform-origin:0 50%;">Not Started</span>
<svg style="left:813.9px;top:763.82px" width="8.1" height="4.2" viewBox="0 0 10 5"><path d="M0 0H10L5 5Z" fill="#c5221f"/></svg>
<svg style="left:1219.95px;top:763.82px" width="8.1" height="4.2" viewBox="0 0 10 5"><path d="M0 0H10L5 5Z" fill="#747679"/></svg>
<span class="t" style="left:49.2px;top:778.21px;font-size:13.35px;line-height:16.02px;color:#000;transform:scaleX(1.0160);transform-origin:0 50%;-webkit-text-stroke:0.22px #000;">Testimonials are authentic (not lorem ipsum)</span>
<svg style="left:706.8px;top:780.07px" width="11.7" height="11.7" viewBox="0 0 12 12"><rect x="0.9" y="0.9" width="10.2" height="10.2" fill="none" stroke="#a81414" stroke-width="1.15" opacity="0.72"/></svg>
<span class="t" style="left:722.4px;top:778.21px;font-size:13.35px;line-height:16.02px;color:#a81414;transform:scaleX(0.9996);transform-origin:0 50%;">Not Started</span>
<svg style="left:813.9px;top:783.82px" width="8.1" height="4.2" viewBox="0 0 10 5"><path d="M0 0H10L5 5Z" fill="#c5221f"/></svg>
<svg style="left:1219.95px;top:783.82px" width="8.1" height="4.2" viewBox="0 0 10 5"><path d="M0 0H10L5 5Z" fill="#747679"/></svg>
<span class="t" style="left:49.2px;top:798.21px;font-size:13.35px;line-height:16.02px;color:#000;transform:scaleX(0.9954);transform-origin:0 50%;-webkit-text-stroke:0.22px #000;">Reviewer names displayed correctly</span>
<svg style="left:706.8px;top:800.08px" width="11.7" height="11.7" viewBox="0 0 12 12"><rect x="0.9" y="0.9" width="10.2" height="10.2" fill="none" stroke="#a81414" stroke-width="1.15" opacity="0.72"/></svg>
<span class="t" style="left:722.4px;top:798.21px;font-size:13.35px;line-height:16.02px;color:#a81414;transform:scaleX(0.9996);transform-origin:0 50%;">Not Started</span>
<svg style="left:813.9px;top:803.83px" width="8.1" height="4.2" viewBox="0 0 10 5"><path d="M0 0H10L5 5Z" fill="#c5221f"/></svg>
<svg style="left:1219.95px;top:803.83px" width="8.1" height="4.2" viewBox="0 0 10 5"><path d="M0 0H10L5 5Z" fill="#747679"/></svg>
<span class="t" style="left:49.2px;top:818.21px;font-size:13.35px;line-height:16.02px;color:#000;transform:scaleX(1.0118);transform-origin:0 50%;-webkit-text-stroke:0.22px #000;">Photos or initials shown</span>
<svg style="left:706.8px;top:820.07px" width="11.7" height="11.7" viewBox="0 0 12 12"><rect x="0.9" y="0.9" width="10.2" height="10.2" fill="none" stroke="#a81414" stroke-width="1.15" opacity="0.72"/></svg>
<span class="t" style="left:722.4px;top:818.21px;font-size:13.35px;line-height:16.02px;color:#a81414;transform:scaleX(0.9996);transform-origin:0 50%;">Not Started</span>
<svg style="left:813.9px;top:823.82px" width="8.1" height="4.2" viewBox="0 0 10 5"><path d="M0 0H10L5 5Z" fill="#c5221f"/></svg>
<svg style="left:1219.95px;top:823.82px" width="8.1" height="4.2" viewBox="0 0 10 5"><path d="M0 0H10L5 5Z" fill="#747679"/></svg>
<span class="t" style="left:49.2px;top:838.21px;font-size:13.35px;line-height:16.02px;color:#000;transform:scaleX(1.0009);transform-origin:0 50%;-webkit-text-stroke:0.22px #000;">Platform indicators shown (Google Yelp etc)</span>
<svg style="left:706.8px;top:840.07px" width="11.7" height="11.7" viewBox="0 0 12 12"><rect x="0.9" y="0.9" width="10.2" height="10.2" fill="none" stroke="#a81414" stroke-width="1.15" opacity="0.72"/></svg>
<span class="t" style="left:722.4px;top:838.21px;font-size:13.35px;line-height:16.02px;color:#a81414;transform:scaleX(0.9996);transform-origin:0 50%;">Not Started</span>
<svg style="left:813.9px;top:843.82px" width="8.1" height="4.2" viewBox="0 0 10 5"><path d="M0 0H10L5 5Z" fill="#c5221f"/></svg>
<svg style="left:1219.95px;top:843.82px" width="8.1" height="4.2" viewBox="0 0 10 5"><path d="M0 0H10L5 5Z" fill="#747679"/></svg>
<span class="t" style="left:49.2px;top:858.21px;font-size:13.35px;line-height:16.02px;color:#000;font-weight:bold;transform:scaleX(0.9352);transform-origin:0 50%;">Gallery Section</span>
<span class="t" style="left:49.2px;top:878.21px;font-size:13.35px;line-height:16.02px;color:#000;transform:scaleX(1.0129);transform-origin:0 50%;-webkit-text-stroke:0.22px #000;">Gallery Section with 3 rows of before/after images included</span>
<svg style="left:706.8px;top:880.07px" width="11.7" height="11.7" viewBox="0 0 12 12"><rect x="0.9" y="0.9" width="10.2" height="10.2" fill="none" stroke="#a81414" stroke-width="1.15" opacity="0.72"/></svg>
<span class="t" style="left:722.4px;top:878.21px;font-size:13.35px;line-height:16.02px;color:#a81414;transform:scaleX(0.9996);transform-origin:0 50%;">Not Started</span>
<svg style="left:813.9px;top:883.82px" width="8.1" height="4.2" viewBox="0 0 10 5"><path d="M0 0H10L5 5Z" fill="#c5221f"/></svg>
<svg style="left:1219.95px;top:883.82px" width="8.1" height="4.2" viewBox="0 0 10 5"><path d="M0 0H10L5 5Z" fill="#747679"/></svg>
<span class="t" style="left:49.2px;top:898.21px;font-size:13.35px;line-height:16.02px;color:#000;transform:scaleX(1.0094);transform-origin:0 50%;-webkit-text-stroke:0.22px #000;">Dramatic &#x27;worst&#x27; before and &#x27;best&#x27; after images used</span>
<svg style="left:706.8px;top:900.07px" width="11.7" height="11.7" viewBox="0 0 12 12"><rect x="0.9" y="0.9" width="10.2" height="10.2" fill="none" stroke="#a81414" stroke-width="1.15" opacity="0.72"/></svg>
<span class="t" style="left:722.4px;top:898.21px;font-size:13.35px;line-height:16.02px;color:#a81414;transform:scaleX(0.9996);transform-origin:0 50%;">Not Started</span>
<svg style="left:813.9px;top:903.82px" width="8.1" height="4.2" viewBox="0 0 10 5"><path d="M0 0H10L5 5Z" fill="#c5221f"/></svg>
<svg style="left:1219.95px;top:903.82px" width="8.1" height="4.2" viewBox="0 0 10 5"><path d="M0 0H10L5 5Z" fill="#747679"/></svg>
<span class="t" style="left:49.2px;top:918.21px;font-size:13.35px;line-height:16.02px;color:#000;transform:scaleX(1.0028);transform-origin:0 50%;-webkit-text-stroke:0.22px #000;">All before/after images have identical zoom and angles</span>
<svg style="left:706.8px;top:920.08px" width="11.7" height="11.7" viewBox="0 0 12 12"><rect x="0.9" y="0.9" width="10.2" height="10.2" fill="none" stroke="#a81414" stroke-width="1.15" opacity="0.72"/></svg>
<span class="t" style="left:722.4px;top:918.21px;font-size:13.35px;line-height:16.02px;color:#a81414;transform:scaleX(0.9996);transform-origin:0 50%;">Not Started</span>
<svg style="left:813.9px;top:923.83px" width="8.1" height="4.2" viewBox="0 0 10 5"><path d="M0 0H10L5 5Z" fill="#c5221f"/></svg>
<svg style="left:1219.95px;top:923.83px" width="8.1" height="4.2" viewBox="0 0 10 5"><path d="M0 0H10L5 5Z" fill="#747679"/></svg>
<span class="t" style="left:49.2px;top:938.21px;font-size:13.35px;line-height:16.02px;color:#000;transform:scaleX(1.0090);transform-origin:0 50%;-webkit-text-stroke:0.22px #000;">Clear borders between patients</span>
<svg style="left:706.8px;top:940.07px" width="11.7" height="11.7" viewBox="0 0 12 12"><rect x="0.9" y="0.9" width="10.2" height="10.2" fill="none" stroke="#a81414" stroke-width="1.15" opacity="0.72"/></svg>
<span class="t" style="left:722.4px;top:938.21px;font-size:13.35px;line-height:16.02px;color:#a81414;transform:scaleX(0.9996);transform-origin:0 50%;">Not Started</span>
<svg style="left:813.9px;top:943.82px" width="8.1" height="4.2" viewBox="0 0 10 5"><path d="M0 0H10L5 5Z" fill="#c5221f"/></svg>
<svg style="left:1219.95px;top:943.82px" width="8.1" height="4.2" viewBox="0 0 10 5"><path d="M0 0H10L5 5Z" fill="#747679"/></svg>
<span class="t" style="left:49.2px;top:958.21px;font-size:13.35px;line-height:16.02px;color:#000;transform:scaleX(0.9907);transform-origin:0 50%;-webkit-text-stroke:0.22px #000;">Gallery CTA doesn&#x27;t lead to main Gallery page</span>
<svg style="left:706.8px;top:960.07px" width="11.7" height="11.7" viewBox="0 0 12 12"><rect x="0.9" y="0.9" width="10.2" height="10.2" fill="none" stroke="#a81414" stroke-width="1.15" opacity="0.72"/></svg>
<span class="t" style="left:722.4px;top:958.21px;font-size:13.35px;line-height:16.02px;color:#a81414;transform:scaleX(0.9996);transform-origin:0 50%;">Not Started</span>
<svg style="left:813.9px;top:963.82px" width="8.1" height="4.2" viewBox="0 0 10 5"><path d="M0 0H10L5 5Z" fill="#c5221f"/></svg>
<svg style="left:1219.95px;top:963.82px" width="8.1" height="4.2" viewBox="0 0 10 5"><path d="M0 0H10L5 5Z" fill="#747679"/></svg>
<div style="left:810.3px;top:378.3px;width:15.6px;height:15.3px;background:#c5221f;border-radius:2px;"></div>
<svg style="left:813.9px;top:384px" width="8.4" height="4.35" viewBox="0 0 10 5"><path d="M0 0H10L5 5Z" fill="#fff"/></svg>
<span class="t" style="left:1112.4px;top:358.22px;font-size:13.35px;line-height:16.02px;color:#000;transform:scaleX(0.9431);transform-origin:0 50%;">Roxanne</span>
<div style="left:1108px;top:355px;width:128px;height:22px;border:2px solid #0b57d0;"></div>
<div style="left:1230px;top:371px;width:10px;height:10px;background:#0b57d0;border-radius:50%;border:1px solid #fff;"></div>
<span class="t" style="left:291.3px;top:301.8px;font-size:12.75px;line-height:15.3px;color:#fff;font-weight:bold;transform:scaleX(1.0608);transform-origin:0 50%;">QA Checklist: Home Page</span>
<span class="t" style="left:745.2px;top:301.8px;font-size:12.75px;line-height:15.3px;color:#fff;font-weight:bold;transform:scaleX(1.0548);transform-origin:0 50%;">Status</span>
<span class="t" style="left:946.2px;top:301.8px;font-size:12.75px;line-height:15.3px;color:#fff;font-weight:bold;transform:scaleX(1.2534);transform-origin:0 50%;">Notes</span>
<span class="t" style="left:1140.6px;top:301.8px;font-size:12.75px;line-height:15.3px;color:#fff;font-weight:bold;transform:scaleX(1.1144);transform-origin:0 50%;">Reviewer</span>
<div style="left:1260.9px;top:299.25px;width:216.9px;height:18.6px;background:#e3e7e4;border-radius:9.3px;"></div>
<div style="left:1266.3px;top:302.55px;width:11.4px;height:11.7px;background:#5b92f0;border-radius:2px;"></div>
<div style="left:1268.7px;top:305.7px;width:6.6px;height:1.2px;background:#e8f0fe;"></div>
<div style="left:1268.7px;top:307.95px;width:6.6px;height:1.2px;background:#e8f0fe;"></div>
<div style="left:1268.7px;top:310.2px;width:4.5px;height:1.2px;background:#e8f0fe;"></div>
<span class="t" style="left:1284.3px;top:301.65px;font-size:12.75px;line-height:15.3px;color:#000;font-weight:bold;transform:scaleX(1.0731);transform-origin:0 50%;">Home Page Layout Elements</span>
<svg style="left:812.4px;top:390.3px" width="14.4" height="21.6" viewBox="0 0 12 18"><path d="M1 1 L1 14 L4.2 11.2 L6.4 16.2 L8.4 15.3 L6.3 10.5 L10.6 10.5 Z" fill="#fff" stroke="#000" stroke-width="1"/></svg>
<div style="left:1908.3px;top:262px;width:11.7px;height:720px;background:#fff;border-left:1px solid #e1e1e1;"></div>
<div style="left:1908.3px;top:262px;width:11.7px;height:24px;background:#f8f9fa;"></div>
<div style="left:1910.4px;top:337.8px;width:7.5px;height:25.5px;background:#dadce0;border-radius:3.75px;"></div>
<div style="left:1908.3px;top:950.7px;width:11.7px;height:15.75px;background:#f8f9fa;border:1px solid #dcdcdc;"></div>
<div style="left:1908.3px;top:966.3px;width:11.7px;height:15.75px;background:#f8f9fa;border:1px solid #dcdcdc;"></div>
<svg style="left:1912.2px;top:956.1px" width="5.1" height="3.3" viewBox="0 0 10 6"><path d="M0 6H10L5 0Z" fill="#777"/></svg>
<svg style="left:1912.2px;top:972.6px" width="5.1" height="3.3" viewBox="0 0 10 6"><path d="M0 0H10L5 6Z" fill="#777"/></svg>
<!-- bottom -->
<div style="left:0px;top:982px;width:1920px;height:12.3px;background:#fff;border-top:1px solid #e1e1e1;"></div>
<div style="left:0px;top:982px;width:46.01px;height:12.3px;background:#f8f9fa;border-right:1px solid #d0d0d0;"></div>
<div style="left:48.3px;top:984.3px;width:1212.6px;height:8.4px;background:#dadce0;border-radius:4.2px;"></div>
<div style="left:1876.8px;top:982px;width:16.2px;height:12.9px;background:#f8f9fa;border:1px solid #dcdcdc;"></div>
<div style="left:1892.7px;top:982px;width:15.9px;height:12.9px;background:#f8f9fa;border:1px solid #dcdcdc;"></div>
<div style="left:1908.3px;top:982px;width:11.7px;height:12.9px;background:#f3f4f5;"></div>
<svg style="left:1883.1px;top:986.1px" width="3.3" height="5.1" viewBox="0 0 6 10"><path d="M6 0V10L0 5Z" fill="#777"/></svg>
<svg style="left:1899.3px;top:986.1px" width="3.3" height="5.1" viewBox="0 0 6 10"><path d="M0 0V10L6 5Z" fill="#777"/></svg>
<div style="left:0px;top:994.8px;width:1920px;height:37.5px;background:#f6fafd;border-top:1px solid #e4e6e9;"></div>
<div style="left:56.1px;top:1014px;width:12px;height:1.35px;background:#444746;"></div>
<div style="left:61.43px;top:1008.6px;width:1.35px;height:12px;background:#444746;"></div>
<div style="left:94.5px;top:1009.65px;width:15px;height:1.5px;background:#444746;"></div>
<div style="left:94.5px;top:1013.85px;width:15px;height:1.5px;background:#444746;"></div>
<div style="left:94.5px;top:1018.05px;width:15px;height:1.5px;background:#444746;"></div>
<div style="left:618.6px;top:994.8px;width:123.3px;height:37.5px;background:#e1e9f7;"></div>
<span class="t" style="left:147px;top:1007.16px;font-size:14.4px;line-height:17.28px;color:#444746;transform:scaleX(1.0404);transform-origin:0 50%;-webkit-text-stroke:0.3px #444746;">How To Use This Sheet</span>
<svg style="left:313.05px;top:1012.5px" width="8.7" height="4.5" viewBox="0 0 10 5"><path d="M0 0H10L5 5Z" fill="#3c4043"/></svg>
<div style="left:135px;top:1029.75px;width:200.7px;height:2.4px;background:#7f8287;"></div>
<span class="t" style="left:347.4px;top:1007.16px;font-size:14.4px;line-height:17.28px;color:#444746;transform:scaleX(1.0440);transform-origin:0 50%;-webkit-text-stroke:0.3px #444746;">QA Score Card</span>
<svg style="left:459.45px;top:1012.5px" width="8.7" height="4.5" viewBox="0 0 10 5"><path d="M0 0H10L5 5Z" fill="#3c4043"/></svg>
<div style="left:335.7px;top:1029.75px;width:146.1px;height:2.4px;background:#e0806e;"></div>
<span class="t" style="left:492.9px;top:1007.16px;font-size:14.4px;line-height:17.28px;color:#444746;transform:scaleX(1.0598);transform-origin:0 50%;-webkit-text-stroke:0.3px #444746;">Landing Page</span>
<svg style="left:597.45px;top:1012.5px" width="8.7" height="4.5" viewBox="0 0 10 5"><path d="M0 0H10L5 5Z" fill="#3c4043"/></svg>
<div style="left:481.8px;top:1029.75px;width:136.8px;height:2.4px;background:#8e72b8;"></div>
<span class="t" style="left:630.6px;top:1007.16px;font-size:14.4px;line-height:17.28px;color:#1a56c8;font-weight:bold;transform:scaleX(1.0175);transform-origin:0 50%;">Home Page</span>
<svg style="left:721.65px;top:1012.5px" width="8.7" height="4.5" viewBox="0 0 10 5"><path d="M0 0H10L5 5Z" fill="#1a56c8"/></svg>
<div style="left:618.6px;top:1029.75px;width:123.3px;height:2.4px;background:#6f99d8;"></div>
<span class="t" style="left:753.9px;top:1007.16px;font-size:14.4px;line-height:17.28px;color:#444746;transform:scaleX(1.0643);transform-origin:0 50%;-webkit-text-stroke:0.3px #444746;">About Page</span>
<svg style="left:844.65px;top:1012.5px" width="8.7" height="4.5" viewBox="0 0 10 5"><path d="M0 0H10L5 5Z" fill="#3c4043"/></svg>
<div style="left:741.9px;top:1029.75px;width:124.2px;height:2.4px;background:#93c47d;"></div>
<span class="t" style="left:878.4px;top:1007.16px;font-size:14.4px;line-height:17.28px;color:#444746;transform:scaleX(1.0796);transform-origin:0 50%;-webkit-text-stroke:0.3px #444746;">Contact Page</span>
<svg style="left:983.85px;top:1012.5px" width="8.7" height="4.5" viewBox="0 0 10 5"><path d="M0 0H10L5 5Z" fill="#3c4043"/></svg>
<div style="left:866.1px;top:1029.75px;width:138px;height:2.4px;background:#f7d06e;"></div>
<span class="t" style="left:1016.4px;top:1007.16px;font-size:14.4px;line-height:17.28px;color:#444746;transform:scaleX(1.0508);transform-origin:0 50%;-webkit-text-stroke:0.3px #444746;">Service Page</span>
<svg style="left:1117.05px;top:1012.5px" width="8.7" height="4.5" viewBox="0 0 10 5"><path d="M0 0H10L5 5Z" fill="#3c4043"/></svg>
<div style="left:1004.1px;top:1029.75px;width:135px;height:2.4px;background:#e29a5c;"></div>
<span class="t" style="left:1151.4px;top:1007.16px;font-size:14.4px;line-height:17.28px;color:#444746;transform:scaleX(1.0785);transform-origin:0 50%;-webkit-text-stroke:0.3px #444746;">Gallery Index</span>
<svg style="left:1253.55px;top:1012.5px" width="8.7" height="4.5" viewBox="0 0 10 5"><path d="M0 0H10L5 5Z" fill="#3c4043"/></svg>
<div style="left:1139.1px;top:1029.75px;width:135.3px;height:2.4px;background:#b0121c;"></div>
<span class="t" style="left:1287px;top:1007.16px;font-size:14.4px;line-height:17.28px;color:#444746;transform:scaleX(1.0646);transform-origin:0 50%;-webkit-text-stroke:0.3px #444746;">Service Gallery Page</span>
<svg style="left:1441.95px;top:1012.5px" width="8.7" height="4.5" viewBox="0 0 10 5"><path d="M0 0H10L5 5Z" fill="#3c4043"/></svg>
<div style="left:1274.4px;top:1029.75px;width:188.7px;height:2.4px;background:#4e7f8a;"></div>
<span class="t" style="left:1475.4px;top:1007.16px;font-size:14.4px;line-height:17.28px;color:#444746;transform:scaleX(1.0669);transform-origin:0 50%;-webkit-text-stroke:0.3px #444746;">Blog Index</span>
<svg style="left:1559.55px;top:1012.5px" width="8.7" height="4.5" viewBox="0 0 10 5"><path d="M0 0H10L5 5Z" fill="#3c4043"/></svg>
<div style="left:1463.1px;top:1029.75px;width:116.7px;height:2.4px;background:#4a73b8;"></div>
<div style="left:1579.8px;top:996px;width:108px;height:33px;overflow:hidden;"><span class="t" style="left:12.6px;top:11.16px;font-size:14.4px;line-height:17.28px;color:#444746;-webkit-text-stroke:0.3px #444746;transform:scaleX(1.0669);transform-origin:0 50%;">Blog Post Template</span></div>
<div style="left:1579.8px;top:1029.75px;width:108px;height:2.4px;background:#8a4a6c;"></div>
<div style="left:1687.8px;top:995.7px;width:232.5px;height:36.6px;background:#f6fafd;"></div>
<svg style="left:1707.6px;top:1009.2px" width="6.6" height="11.1" viewBox="0 0 8 14"><path d="M7 1L1.4 7L7 13" stroke="#c4c7c5" stroke-width="1.8" fill="none"/></svg>
<svg style="left:1747.2px;top:1009.2px" width="6.6" height="11.1" viewBox="0 0 8 14"><path d="M1 1L6.6 7L1 13" stroke="#444746" stroke-width="1.8" fill="none"/></svg>
<svg style="left:1888.5px;top:1009.5px" width="6.9" height="11.1" viewBox="0 0 8 14"><path d="M7 1L1.4 7L7 13" stroke="#444746" stroke-width="2" fill="none"/></svg>
<div style="left:0px;top:1032px;width:1920px;height:48px;background:linear-gradient(90deg,#241f2d 0%,#241f2d 18%,#2e1b30 34%,#322421 45.6%,#36211e 54.7%,#41171a 64%,#3e1612 73%,#381914 86%,#2e1813 94%,#2e1813 100%);"></div>
<div style="left:20.85px;top:1044.3px;width:20.1px;height:20.1px;background:radial-gradient(circle at 35% 30%,#ffc648,#f59a24 55%,#e8741a 100%);border-radius:50%;"></div>
<span class="t" style="left:50.7px;top:1042.59px;font-size:11.1px;line-height:13.32px;color:#f6f4f8;transform:scaleX(0.9930);transform-origin:0 50%;-webkit-text-stroke:0.3px #f6f4f8;">43°F</span>
<span class="t" style="left:50.7px;top:1058.31px;font-size:11.4px;line-height:13.68px;color:#c4c0c8;transform:scaleX(1.0209);transform-origin:0 50%;">Sunny</span>
<div style="left:353.4px;top:1045.5px;width:10.5px;height:10.5px;background:linear-gradient(135deg,#6fd0ff,#1a9af0);border-radius:0.8px;"></div>
<div style="left:353.4px;top:1056.9px;width:10.5px;height:10.5px;background:linear-gradient(135deg,#6fd0ff,#1a9af0);border-radius:0.8px;"></div>
<div style="left:364.8px;top:1045.5px;width:10.5px;height:10.5px;background:linear-gradient(135deg,#6fd0ff,#1a9af0);border-radius:0.8px;"></div>
<div style="left:364.8px;top:1056.9px;width:10.5px;height:10.5px;background:linear-gradient(135deg,#6fd0ff,#1a9af0);border-radius:0.8px;"></div>
<div style="left:389.4px;top:1038.9px;width:219px;height:34.5px;background:#3a3144;border-radius:17.25px;"></div>
<svg style="left:399.9px;top:1047.9px" width="15.9" height="15.9" viewBox="0 0 20 20"><circle cx="8" cy="8" r="5.8" stroke="#f2f0f4" stroke-width="1.8" fill="none"/><path d="M12.4 12.4L18 18" stroke="#f2f0f4" stroke-width="2"/></svg>
<span class="t" style="left:426px;top:1048.38px;font-size:13.2px;line-height:15.84px;color:#d8d4dc;transform:scaleX(0.9970);transform-origin:0 50%;">Search</span>
<div style="left:1405.5px;top:1035.6px;width:38.4px;height:40.5px;background:rgba(255,255,255,0.07);border-radius:4.5px;"></div>
<div style="left:621px;top:1051.2px;width:17.4px;height:15px;background:#6c6c70;border-radius:1px;"></div>
<div style="left:627px;top:1044.9px;width:18px;height:15.6px;background:linear-gradient(135deg,#fafafa,#c8c8cc);border-radius:1px;"></div>
<div style="left:665.4px;top:1048.5px;width:21.6px;height:18.9px;background:#f4f4f6;border-radius:3.3px;"></div>
<div style="left:671.1px;top:1044.6px;width:10.2px;height:6px;border:1.35px solid #2a9ae0;border-bottom:none;border-radius:2px 2px 0 0;"></div>
<div style="left:672px;top:1053.6px;width:3.9px;height:3.9px;background:#f25022;"></div>
<div style="left:676.5px;top:1053.6px;width:3.9px;height:3.9px;background:#7fba00;"></div>
<div style="left:672px;top:1058.1px;width:3.9px;height:3.9px;background:#00a4ef;"></div>
<div style="left:676.5px;top:1058.1px;width:3.9px;height:3.9px;background:#ffb900;"></div>
<div style="left:712.5px;top:1044.6px;width:17.1px;height:23.1px;background:#5a6e80;border-radius:1px;"></div>
<div style="left:714.6px;top:1046.7px;width:12.9px;height:5.1px;background:#3aa0e0;"></div>
<div style="left:714.6px;top:1053.9px;width:3.3px;height:3.3px;background:#dfe6ec;"></div>
<div style="left:714.6px;top:1058.4px;width:3.3px;height:3.3px;background:#dfe6ec;"></div>
<div style="left:714.6px;top:1062.9px;width:3.3px;height:3.3px;background:#dfe6ec;"></div>
<div style="left:719.1px;top:1053.9px;width:3.3px;height:3.3px;background:#dfe6ec;"></div>
<div style="left:719.1px;top:1058.4px;width:3.3px;height:3.3px;background:#dfe6ec;"></div>
<div style="left:719.1px;top:1062.9px;width:3.3px;height:3.3px;background:#dfe6ec;"></div>
<div style="left:723.6px;top:1053.9px;width:3.3px;height:3.3px;background:#dfe6ec;"></div>
<div style="left:723.6px;top:1058.4px;width:3.3px;height:3.3px;background:#dfe6ec;"></div>
<div style="left:723.6px;top:1062.9px;width:3.3px;height:3.3px;background:#dfe6ec;"></div>
<svg style="left:753px;top:1044px" width="24" height="24" viewBox="-12 -12 24 24"><circle r="12" fill="#dd4b3e"/><path d="M0 0L-10.39 6A12 12 0 0 0 0 12A12 12 0 0 0 10.39 6Z" fill="#f6c631"/><path d="M0 0L-10.39 -6A12 12 0 0 0 -10.39 6A12 12 0 0 0 0 12Z" fill="#1fa463"/><path d="M0 0L0 12A12 12 0 0 0 10.39 6Z" fill="#f6c631"/><path d="M-10.39 -6A12 12 0 0 1 10.39 -6L0 -6Z" fill="#dd4b3e"/><circle r="5.6" fill="#fff"/><circle r="4.3" fill="#4a8af4"/></svg>
<div style="left:762px;top:1072.95px;width:6px;height:2.25px;background:#a4a4aa;border-radius:1px;"></div>
<div style="left:798px;top:1044.9px;width:14.4px;height:14.4px;background:#f0f0f2;border:1.2px solid #d8552c;border-radius:1px;"></div>
<div style="left:805.5px;top:1052.4px;width:10.5px;height:10.5px;border:1.05px solid #8a8a8e;border-radius:1px;"></div>
<svg style="left:809.4px;top:1055.1px" width="12" height="12" viewBox="0 0 16 16"><path d="M2 2L12 12M12 4L4 12" stroke="#3a9ae0" stroke-width="1.6"/><circle cx="4" cy="13" r="1.8" fill="none" stroke="#3a9ae0" stroke-width="1.4"/></svg>
<div style="left:841.2px;top:1044.3px;width:23.4px;height:23.4px;background:#1ed760;border-radius:50%;"></div>
<svg style="left:843.9px;top:1047.9px" width="18" height="15" viewBox="0 0 24 20"><path d="M3 6C9 4 16 4.6 21 7.4M4.4 10.6C9 9.2 14.6 9.6 19 12M5.6 14.8C9 14 13 14.2 16.6 16" stroke="#0a2a12" stroke-width="2.4" fill="none" stroke-linecap="round"/></svg>
<div style="left:849.9px;top:1072.95px;width:6px;height:2.25px;background:#a4a4aa;border-radius:1px;"></div>
<div style="left:885px;top:1045.5px;width:24px;height:19.5px;background:#f8c83a;border-radius:1px;"></div>
<div style="left:885px;top:1044px;width:10.5px;height:4.5px;background:#e8a820;border-radius:1px 1px 0 0;"></div>
<div style="left:889.5px;top:1059.6px;width:15px;height:6.3px;background:#2a8ae0;"></div>
<div style="left:894px;top:1072.95px;width:6px;height:2.25px;background:#a4a4aa;border-radius:1px;"></div>
<div style="left:929.4px;top:1044.9px;width:21.9px;height:21.6px;background:#330000;border-radius:3px;"></div>
<span class="t" style="left:933.3px;top:1048.62px;font-size:12.3px;line-height:14.76px;color:#ff9a00;font-weight:bold;transform:scaleX(1.1220);transform-origin:0 50%;">Ai</span>
<div style="left:973.5px;top:1044.9px;width:21.9px;height:21.6px;background:#001e36;border-radius:3px;"></div>
<span class="t" style="left:977.4px;top:1049.16px;font-size:11.4px;line-height:13.68px;color:#31a8ff;font-weight:bold;transform:scaleX(1.0112);transform-origin:0 50%;">Ps</span>
<div style="left:981.6px;top:1072.95px;width:6px;height:2.25px;background:#a4a4aa;border-radius:1px;"></div>
<div style="left:1017.9px;top:1044.9px;width:21.9px;height:21.6px;background:#fff;border-radius:3.6px;"></div>
<svg style="left:1020.6px;top:1049.1px" width="16.5" height="13.5" viewBox="0 0 22 18"><path d="M2.5 3H19.5V6L13.6 9L19.5 12V15H2.5V12L8.4 9L2.5 6Z" stroke="#000" stroke-width="2.3" fill="none" stroke-linejoin="round"/></svg>
<div style="left:1060.5px;top:1044px;width:24px;height:24px;background:linear-gradient(135deg,#22c4d8,#6a3ae0);border-radius:50%;"></div>
<span class="t" style="left:1066.8px;top:1046.1px;font-size:16.5px;line-height:19.8px;color:#fff;font-style:italic;font-family:'Liberation Serif',serif;">C</span>
<div style="left:1104.6px;top:1044px;width:24px;height:24px;background:#58b0d0;border-radius:50%;border:1.2px solid #9ad4e8;"></div>
<span class="t" style="left:1111.8px;top:1047px;font-size:15px;line-height:18px;color:#fff;">S</span>
<div style="left:1149.6px;top:1044.6px;width:23.1px;height:23.1px;background:#117d10;border-radius:1px;"></div>
<div style="left:1152px;top:1047px;width:18.3px;height:18.3px;background:#fff;border-radius:50%;"></div>
<svg style="left:1152px;top:1047px" width="18.3" height="18.3" viewBox="0 0 24 24"><path d="M12 6C9 3.6 6.4 3.4 5 4.6C8 6 10 9 12 12C14 9 16 6 19 4.6C17.6 3.4 15 3.6 12 6Z M4 7C2 11 3 17 6 20C7 17 9.6 14 12 12.4C14.4 14 17 17 18 20C21 17 22 11 20 7C17 9 14 12 12 15C10 12 7 9 4 7Z" fill="#117d10"/></svg>
<div style="left:1193.4px;top:1044.6px;width:23.1px;height:23.1px;background:#0a0a0c;border-radius:50%;"></div>
<svg style="left:1197.6px;top:1049.4px" width="15" height="13.5" viewBox="0 0 20 18"><path d="M3 8A10 10 0 0 1 17 8M5.4 11.4A6.6 6.6 0 0 1 14.6 11.4M8 14.6A3 3 0 0 1 12 14.6" stroke="#fff" stroke-width="1.8" fill="none"/></svg>
<div style="left:1237.8px;top:1045.2px;width:21.3px;height:21.3px;background:#f8c81c;border-radius:1px;"></div>
<svg style="left:1248.9px;top:1056.3px" width="10.2" height="10.2" viewBox="0 0 10 10"><path d="M10 0V10H0Z" fill="#6a5410"/></svg>
<div style="left:1281.9px;top:1045.2px;width:21px;height:21px;background:#2fc24a;border-radius:3.3px;"></div>
<svg style="left:1285.8px;top:1049.1px" width="13.2" height="13.2" viewBox="0 0 16 16"><path d="M2 2L14 14M14 2L2 14" stroke="#0a3a14" stroke-width="2.6"/></svg>
<svg style="left:1324.2px;top:1043.7px" width="24.6" height="24.6" viewBox="-12 -12 24 24"><path d="M0.00 -9.20A5.4 5.4 0 0 1 7.97 -4.60L3.46 2.00M7.97 -4.60A5.4 5.4 0 0 1 7.97 4.60L0.00 4.00M7.97 4.60A5.4 5.4 0 0 1 0.00 9.20L-3.46 2.00M0.00 9.20A5.4 5.4 0 0 1 -7.97 4.60L-3.46 -2.00M-7.97 4.60A5.4 5.4 0 0 1 -7.97 -4.60L-0.00 -4.00M-7.97 -4.60A5.4 5.4 0 0 1 -0.00 -9.20L3.46 -2.00" fill="none" stroke="#f4f0f0" stroke-width="1.6" stroke-linejoin="round"/></svg>
<div style="left:1368.9px;top:1044px;width:24px;height:24px;background:#0c0c10;border-radius:50%;"></div>
<div style="left:1373.1px;top:1050.6px;width:15.6px;height:9.6px;background:#f4f0f4;border-radius:3.3px;"></div>
<div style="left:1375.8px;top:1053.6px;width:3.6px;height:3.3px;background:#0c0c10;"></div>
<div style="left:1382.4px;top:1053.6px;width:3.6px;height:3.3px;background:#0c0c10;"></div>
<div style="left:1374.9px;top:1062.3px;width:12px;height:2.4px;background:#b070e0;border-radius:1px;"></div>
<svg style="left:1412.1px;top:1043.7px" width="24.6" height="24.6" viewBox="-12 -12 24 24"><circle r="12" fill="#dd4b3e"/><path d="M0 0L-10.39 6A12 12 0 0 0 0 12A12 12 0 0 0 10.39 6Z" fill="#f6c631"/><path d="M0 0L-10.39 -6A12 12 0 0 0 -10.39 6A12 12 0 0 0 0 12Z" fill="#1fa463"/><path d="M0 0L0 12A12 12 0 0 0 10.39 6Z" fill="#f6c631"/><path d="M-10.39 -6A12 12 0 0 1 10.39 -6L0 -6Z" fill="#dd4b3e"/><circle r="5.6" fill="#fff"/><circle r="4.3" fill="#4a8af4"/></svg>
<div style="left:1428px;top:1043.1px;width:10.2px;height:10.2px;background:radial-gradient(ellipse 26% 30% at 44% 36%,#c9926a 0,#a96f48 60%,rgba(169,111,72,0) 100%),radial-gradient(ellipse 42% 36% at 52% 90%,#0f0b06 0,#1a120a 65%,rgba(26,18,10,0) 100%),radial-gradient(ellipse 18% 38% at 86% 48%,#b07a3e 0,rgba(176,122,62,0) 100%),radial-gradient(ellipse 20% 40% at 14% 55%,#3a2412 0,rgba(58,36,18,0) 100%),#6a4322;border-radius:50%;"></div>
<div style="left:1416.9px;top:1072.95px;width:15px;height:2.25px;background:#d9a6e6;border-radius:1px;"></div>
<div style="left:1456.5px;top:1044px;width:24px;height:24px;background:#f8f4ee;border-radius:50%;"></div>
<div style="left:1461.6px;top:1053px;width:7.5px;height:2.7px;background:#36c5f0;border-radius:1px;"></div>
<div style="left:1470.3px;top:1049.1px;width:2.7px;height:7.5px;background:#2eb67d;border-radius:1px;"></div>
<div style="left:1467.9px;top:1056.9px;width:7.5px;height:2.7px;background:#ecb22e;border-radius:1px;"></div>
<div style="left:1464.3px;top:1055.4px;width:2.7px;height:7.5px;background:#e01e5a;border-radius:1px;"></div>
<div style="left:1465.5px;top:1072.95px;width:6px;height:2.25px;background:#a4a4aa;border-radius:1px;"></div>
<div style="left:1503px;top:1044.6px;width:18.6px;height:22.8px;background:#4ab0e8;border-radius:1px;"></div>
<div style="left:1503px;top:1044.6px;width:18.6px;height:3.6px;background:#2a6a9a;"></div>
<div style="left:1505.7px;top:1050.6px;width:13.2px;height:1.35px;background:#1a5a8a;"></div>
<div style="left:1505.7px;top:1054.2px;width:13.2px;height:1.35px;background:#1a5a8a;"></div>
<div style="left:1505.7px;top:1057.8px;width:13.2px;height:1.35px;background:#1a5a8a;"></div>
<div style="left:1505.7px;top:1061.4px;width:13.2px;height:1.35px;background:#1a5a8a;"></div>
<div style="left:1503px;top:1064.7px;width:18.6px;height:2.7px;background:#e8a84a;"></div>
<div style="left:1509.3px;top:1072.95px;width:6px;height:2.25px;background:#a4a4aa;border-radius:1px;"></div>
<div style="left:1545px;top:1044.6px;width:23.4px;height:23.4px;background:#1a1a1e;border-radius:3px;"></div>
<div style="left:1551.9px;top:1047.6px;width:4.8px;height:5.4px;background:#f24e1e;border-radius:2px 0 0 2px;"></div>
<div style="left:1556.7px;top:1047.6px;width:4.8px;height:5.4px;background:#ff7262;border-radius:0 2px 2px 0;"></div>
<div style="left:1551.9px;top:1053px;width:4.8px;height:5.4px;background:#a259ff;border-radius:2px 0 0 2px;"></div>
<div style="left:1556.7px;top:1053px;width:4.8px;height:5.4px;background:#1abcfe;border-radius:50%;"></div>
<div style="left:1551.9px;top:1058.4px;width:4.8px;height:5.4px;background:#0acf83;border-radius:2px 0 2px 2px;"></div>
<div style="left:1554px;top:1072.95px;width:6px;height:2.25px;background:#a4a4aa;border-radius:1px;"></div>
<span class="t" style="left:1856.7px;top:1041.75px;font-size:11.25px;line-height:13.5px;color:#f2f0f4;transform:scaleX(1.0539);transform-origin:0 50%;">8:32 AM</span>
<span class="t" style="left:1845.9px;top:1058.1px;font-size:11.25px;line-height:13.5px;color:#f2f0f4;transform:scaleX(1.1095);transform-origin:0 50%;">11/6/2025</span>
</div>
</body></html>
